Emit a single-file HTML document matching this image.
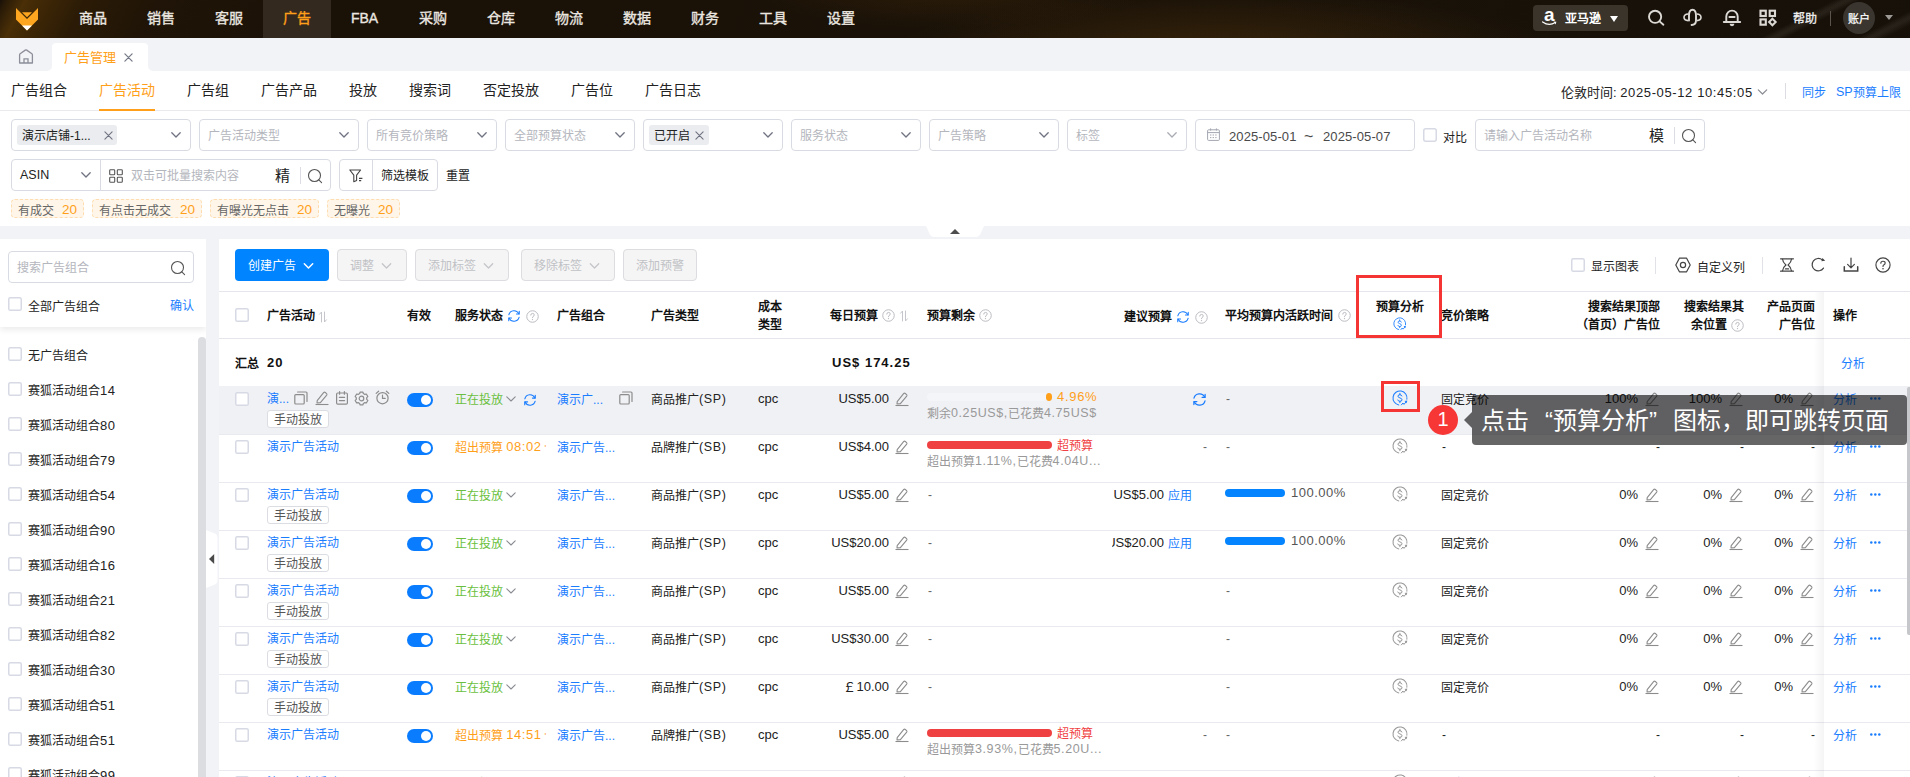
<!DOCTYPE html>
<html lang="zh-CN"><head><meta charset="utf-8"><title>ad</title><style>
*{box-sizing:border-box;margin:0;padding:0}
html,body{width:1910px;height:777px;overflow:hidden;background:#f2f3f7}
body{font-family:"Liberation Sans",sans-serif;font-size:12px;color:#222;position:relative;line-height:1}
.abs{position:absolute}
svg{display:block;overflow:visible}
/* top bar */
#top{position:absolute;left:0;top:0;width:1910px;height:38px;background:
 radial-gradient(ellipse 330px 60px at 1225px 52px,rgba(115,72,15,.32),rgba(115,72,15,0) 100%),
 radial-gradient(ellipse 200px 40px at 950px -12px,rgba(115,72,15,.2),rgba(115,72,15,0) 100%),
 linear-gradient(118deg,#181008 0px,#2a1b07 6px,#4a2f07 22px,#3e2706 40px,#2b1b06 75px,#1f1407 140px,#1a1107 300px,#1a1208 1100px,#15100a 1910px);}
.nav{position:absolute;top:0;height:38px;width:68px;text-align:center;line-height:37px;font-size:14px;color:#ebe7e0;font-weight:400;-webkit-text-stroke:.35px #ebe7e0;padding-right:1px}
.nav.on{background:#33291e;color:#ff9f1a;-webkit-text-stroke:.35px #ff9f1a}
.t{position:absolute;white-space:nowrap}
/* tabs */
#tabbar{position:absolute;left:0;top:38px;width:1910px;height:33px;background:#fff}
.tg{position:absolute;background:#f2f3f7}
#tab1{position:absolute;left:52px;top:5px;width:96px;height:28px;background:#fff;border-radius:4px 4px 0 0}
/* subnav */
#sub{position:absolute;left:0;top:71px;width:1910px;height:40px;background:#fff;border-bottom:1px solid #e9eaee}
.sn{position:absolute;top:0;height:39px;line-height:39px;font-size:14px;color:#222;white-space:nowrap}
.sn.on{color:#ff9f1a}
/* filters */
#filt{position:absolute;left:0;top:111px;width:1910px;height:115px;background:#fff}
.sel{position:absolute;height:32px;border:1px solid #d9dbe3;border-radius:4px;background:#fff}
.ph{position:absolute;left:8px;top:1px;line-height:30px;color:#b4b6bd;font-size:12px;white-space:nowrap}
.chev{position:absolute;right:9px;top:12px}
.chip{position:absolute;left:5px;top:5px;height:20px;background:#ebecef;border-radius:3px;line-height:22px;font-size:12px;color:#222;padding-left:5px;overflow:hidden;white-space:nowrap}
.ftag{position:absolute;top:88px;height:19px;border:1px dashed #ffddb0;background:#fff6e9;border-radius:4px;font-size:12px;line-height:17px;color:#666;white-space:nowrap}
.ftag b{font-weight:400;color:#ff9f1a;font-size:13.5px;position:absolute;right:6px;top:1px}
</style></head><body>
<div id="top">
<div class="abs" style="left:1700px;top:0;width:210px;height:38px;background:linear-gradient(153deg,rgba(255,240,220,0) 61px,rgba(255,240,220,.07) 66px,rgba(255,240,220,.07) 68px,rgba(255,240,220,0) 73px,rgba(255,240,220,0) 105px,rgba(255,240,220,.07) 110px,rgba(255,240,220,.07) 112px,rgba(255,240,220,0) 118px)"></div>
<div class="abs" style="left:15px;top:7px"><svg width="24" height="24" viewBox="0 0 24 24" style=""><path d="M1 1 L12 12 L23 1 V12.5 L12 23.5 L1 12.5 Z" fill="#ffa620"/><path d="M7 5.2 H17 L12 10.2 Z" fill="#ffa620"/><path d="M7 18.5 H17 L12 23.5 Z" fill="#fff"/></svg></div>
<div class="nav" style="left:59px">商品</div>
<div class="nav" style="left:127px">销售</div>
<div class="nav" style="left:195px">客服</div>
<div class="nav on" style="left:263px">广告</div>
<div class="nav" style="left:331px">FBA</div>
<div class="nav" style="left:399px">采购</div>
<div class="nav" style="left:467px">仓库</div>
<div class="nav" style="left:535px">物流</div>
<div class="nav" style="left:603px">数据</div>
<div class="nav" style="left:671px">财务</div>
<div class="nav" style="left:739px">工具</div>
<div class="nav" style="left:807px">设置</div>
<div class="abs" style="left:1533px;top:5px;width:95px;height:26px;background:#3a342b;border-radius:4px"></div>
<div class="t" style="left:1544px;top:5px;font-size:19px;font-weight:700;color:#fff">a</div>
<div class="abs" style="left:1542px;top:21px"><svg width="15" height="5" viewBox="0 0 15 5" style=""><path d="M0.6 0.9 Q7 5.4 13.2 1.6" fill="none" stroke="#fff" stroke-width="1.2" stroke-linecap="round"/><path d="M11.6 0.4 L14.4 0.8 L13.6 3.4 Z" fill="#fff"/></svg></div>
<div class="t" style="left:1565px;top:13px;font-size:12px;color:#fff;font-weight:700">亚马逊</div>
<div class="abs" style="left:1610px;top:16px;width:0;height:0;border-left:4.25px solid transparent;border-right:4.25px solid transparent;border-top:6px solid #fff"></div>
<div class="abs" style="left:1647px;top:9px"><svg width="18" height="18" viewBox="0 0 18 18" style=""><circle cx="8.1" cy="7.8" r="6.1" fill="none" stroke="#dcd9d5" stroke-width="1.9"/><path d="M12.6 12.4 L16.4 15.7" stroke="#dcd9d5" stroke-width="1.9" stroke-linecap="round"/></svg></div>
<div class="abs" style="left:1683px;top:8px"><svg width="18" height="18" viewBox="0 0 18 18" style=""><path d="M6.0 12.6 V7.6 Q6.0 1.8 9.5 1.8 Q13.0 1.8 13.0 7.6 V12.4 Q13.0 16.6 8.6 17.0" fill="none" stroke="#dcd9d5" stroke-width="1.9" stroke-linecap="round"/><path d="M5.2 6.0 Q1.0 6.2 1.0 9.3 Q1.0 12.4 5.2 12.6" fill="none" stroke="#dcd9d5" stroke-width="1.6"/><path d="M13.8 6.0 Q18.0 6.2 18.0 9.3 Q18.0 12.4 13.8 12.6" fill="none" stroke="#dcd9d5" stroke-width="1.6"/></svg></div>
<div class="abs" style="left:1723px;top:9px"><svg width="18" height="18" viewBox="0 0 18 18" style=""><path d="M3.3 13 V7.6 A5.7 6 0 0 1 14.7 7.6 V13" fill="none" stroke="#dcd9d5" stroke-width="1.9"/><path d="M0.8 13 H17.2 M6.4 8 H11.6" fill="none" stroke="#dcd9d5" stroke-width="1.9" stroke-linecap="round"/><path d="M6.6 14.8 A2.4 2.4 0 0 0 11.4 14.8 Z" fill="#dcd9d5"/></svg></div>
<div class="abs" style="left:1759px;top:9px"><svg width="18" height="18" viewBox="0 0 18 18" style=""><rect x="1.5" y="1.7" width="5.3" height="5.3" fill="none" stroke="#dcd9d5" stroke-width="2.1"/><rect x="10.7" y="1.7" width="5.3" height="5.3" fill="none" stroke="#dcd9d5" stroke-width="2.1"/><rect x="1.5" y="10.4" width="5.3" height="5.3" fill="none" stroke="#dcd9d5" stroke-width="2.1"/><path d="M13.4 9.7 L16.7 13 L13.4 16.3 L10.1 13 Z" fill="none" stroke="#dcd9d5" stroke-width="2" stroke-linejoin="miter"/></svg></div>
<div class="t" style="left:1793px;top:13px;font-size:12px;color:#f1f1f1;-webkit-text-stroke:.3px #f1f1f1;letter-spacing:.3px">帮助</div>
<div class="abs" style="left:1830px;top:11px;width:1px;height:15px;background:#5a544c"></div>
<div class="abs" style="left:1843px;top:2px;width:32px;height:32px;border-radius:16px;background:#3a362f"></div>
<div class="t" style="left:1848px;top:14px;font-size:11px;color:#fff;letter-spacing:-0.3px;-webkit-text-stroke:.25px #fff">账户</div>
<div class="abs" style="left:1885px;top:15px;width:0;height:0;border-left:4px solid transparent;border-right:4px solid transparent;border-top:5.5px solid #9d9a96"></div>
</div>
<div id="tabbar">
<div class="tg" style="left:0;top:0;width:52px;height:33px;border-bottom-right-radius:5px"></div><div class="tg" style="left:148px;top:0;width:1762px;height:33px;border-bottom-left-radius:5px"></div><div class="tg" style="left:52px;top:0;width:96px;height:12px"></div>
<div class="abs" style="left:18px;top:11px"><svg width="16" height="15" viewBox="0 0 16 15" style=""><path d="M1.6 14 V5.8 Q1.6 5.2 2.1 4.8 L7.3 1.1 Q8 0.6 8.7 1.1 L13.9 4.8 Q14.4 5.2 14.4 5.8 V14 Z" fill="none" stroke="#8c8e99" stroke-width="1.3" stroke-linejoin="round"/><path d="M6 14 V9.8 H10 V14" fill="none" stroke="#8c8e99" stroke-width="1.3"/></svg></div>
<div id="tab1"><div class="t" style="left:12px;top:8px;font-size:13px;color:#ff9f1a">广告管理</div><div class="abs" style="left:72px;top:10px"><svg width="9" height="9" viewBox="0 0 10 10" style=""><path d="M1 1 L9 9 M9 1 L1 9" fill="none" stroke="#757a88" stroke-width="1.4" stroke-linecap="round"/></svg></div></div>
</div>
<div id="sub">
<div class="sn" style="left:11px">广告组合</div>
<div class="sn on" style="left:99px">广告活动</div>
<div class="sn" style="left:187px">广告组</div>
<div class="sn" style="left:261px">广告产品</div>
<div class="sn" style="left:349px">投放</div>
<div class="sn" style="left:409px">搜索词</div>
<div class="sn" style="left:483px">否定投放</div>
<div class="sn" style="left:571px">广告位</div>
<div class="sn" style="left:645px">广告日志</div>
<div class="abs" style="left:99px;top:38px;width:56px;height:2px;background:#ff9f1a"></div>
<div class="t" style="left:1561px;top:15px;font-size:13px;color:#222">伦敦时间: <span style="letter-spacing:.62px">2025-05-12 10:45:05</span></div>
<div class="abs" style="left:1757px;top:18px"><svg width="11" height="6" viewBox="0 0 10 6" style=""><path d="M0.8 0.8 L5 5 L9.2 0.8" fill="none" stroke="#8a8c93" stroke-width="1.2" stroke-linecap="round" stroke-linejoin="round"/></svg></div>
<div class="abs" style="left:1785px;top:12px;width:1px;height:16px;background:#dcdde3"></div>
<div class="t" style="left:1802px;top:16px;font-size:12px;color:#1a7dff">同步</div>
<div class="t" style="left:1836px;top:16px;font-size:12px;color:#1a7dff"><span style="position:relative;top:-1px;font-size:12.5px">SP</span>预算上限</div>
</div>
<div id="filt">
<div class="sel" style="left:11px;top:8px;width:180px"><div class="chip" style="width:100px">演示店铺-1...<span class="abs" style="left:87px;top:6px"><svg width="9" height="9" viewBox="0 0 10 10" style=""><path d="M1 1 L9 9 M9 1 L1 9" fill="none" stroke="#6f7280" stroke-width="1.2" stroke-linecap="round"/></svg></span></div><div class="chev"><svg width="10" height="6" viewBox="0 0 10 6" style=""><path d="M0.8 0.8 L5 5 L9.2 0.8" fill="none" stroke="#6f7280" stroke-width="1.3" stroke-linecap="round" stroke-linejoin="round"/></svg></div></div>
<div class="sel" style="left:199px;top:8px;width:160px"><div class="ph">广告活动类型</div><div class="chev"><svg width="10" height="6" viewBox="0 0 10 6" style=""><path d="M0.8 0.8 L5 5 L9.2 0.8" fill="none" stroke="#6f7280" stroke-width="1.3" stroke-linecap="round" stroke-linejoin="round"/></svg></div></div>
<div class="sel" style="left:367px;top:8px;width:130px"><div class="ph">所有竞价策略</div><div class="chev"><svg width="10" height="6" viewBox="0 0 10 6" style=""><path d="M0.8 0.8 L5 5 L9.2 0.8" fill="none" stroke="#6f7280" stroke-width="1.3" stroke-linecap="round" stroke-linejoin="round"/></svg></div></div>
<div class="sel" style="left:505px;top:8px;width:130px"><div class="ph">全部预算状态</div><div class="chev"><svg width="10" height="6" viewBox="0 0 10 6" style=""><path d="M0.8 0.8 L5 5 L9.2 0.8" fill="none" stroke="#6f7280" stroke-width="1.3" stroke-linecap="round" stroke-linejoin="round"/></svg></div></div>
<div class="sel" style="left:643px;top:8px;width:140px"><div class="chip" style="width:60px">已开启<span class="abs" style="left:46px;top:6px"><svg width="9" height="9" viewBox="0 0 10 10" style=""><path d="M1 1 L9 9 M9 1 L1 9" fill="none" stroke="#6f7280" stroke-width="1.2" stroke-linecap="round"/></svg></span></div><div class="chev"><svg width="10" height="6" viewBox="0 0 10 6" style=""><path d="M0.8 0.8 L5 5 L9.2 0.8" fill="none" stroke="#6f7280" stroke-width="1.3" stroke-linecap="round" stroke-linejoin="round"/></svg></div></div>
<div class="sel" style="left:791px;top:8px;width:130px"><div class="ph">服务状态</div><div class="chev"><svg width="10" height="6" viewBox="0 0 10 6" style=""><path d="M0.8 0.8 L5 5 L9.2 0.8" fill="none" stroke="#6f7280" stroke-width="1.3" stroke-linecap="round" stroke-linejoin="round"/></svg></div></div>
<div class="sel" style="left:929px;top:8px;width:130px"><div class="ph">广告策略</div><div class="chev"><svg width="10" height="6" viewBox="0 0 10 6" style=""><path d="M0.8 0.8 L5 5 L9.2 0.8" fill="none" stroke="#6f7280" stroke-width="1.3" stroke-linecap="round" stroke-linejoin="round"/></svg></div></div>
<div class="sel" style="left:1067px;top:8px;width:120px"><div class="ph">标签</div><div class="chev"><svg width="10" height="6" viewBox="0 0 10 6" style=""><path d="M0.8 0.8 L5 5 L9.2 0.8" fill="none" stroke="#a9abb3" stroke-width="1.3" stroke-linecap="round" stroke-linejoin="round"/></svg></div></div>
<div class="sel" style="left:1195px;top:8px;width:220px"><div class="abs" style="left:11px;top:8px"><svg width="13" height="13" viewBox="0 0 13 13" style=""><rect x="0.6" y="1.8" width="11.8" height="10.6" rx="1" fill="none" stroke="#a3a6b0" stroke-width="1"/><path d="M0.6 4.6 H12.4 M3.6 0.4 V2.6 M9.4 0.4 V2.6" stroke="#a3a6b0" stroke-width="1"/><path d="M3 7 H10 M3 9.6 H10" stroke="#a3a6b0" stroke-width="1" stroke-dasharray="1.4 1.2"/></svg></div><div class="t" style="left:33px;top:10px;font-size:13px;color:#4a4a4a;letter-spacing:.1px">2025-05-01</div><div class="t" style="left:108px;top:9px;font-size:16px;color:#4a4a4a">~</div><div class="t" style="left:127px;top:10px;font-size:13px;color:#4a4a4a;letter-spacing:.1px">2025-05-07</div></div>
<div class="abs" style="left:1423px;top:17px"><svg width="14" height="14" viewBox="0 0 14 14" style=""><rect x="0.75" y="0.75" width="12.5" height="12.5" rx="2" fill="#fff" stroke="#d7dae4" stroke-width="1.5"/></svg></div>
<div class="t" style="left:1443px;top:21px;font-size:12px;color:#222">对比</div>
<div class="sel" style="left:1475px;top:8px;width:230px"><div class="ph">请输入广告活动名称</div><div class="t" style="left:173px;top:8px;font-size:15px;color:#222">模</div><div class="abs" style="left:198px;top:7px;width:1px;height:17px;background:#dcdde3"></div><div class="abs" style="left:205px;top:8px"><svg width="16" height="16" viewBox="0 0 16 16" style=""><circle cx="7.5" cy="7.5" r="6" fill="none" stroke="#555" stroke-width="1.1"/><path d="M11.8 11.8 L14.6 14.6" stroke="#555" stroke-width="1.1" stroke-linecap="round"/></svg></div></div>
<div class="sel" style="left:11px;top:48px;width:320px"></div>
<div class="abs" style="left:100px;top:48px;width:1px;height:32px;background:#d9dbe3"></div>
<div class="t" style="left:20px;top:58px;font-size:12.5px;color:#222">ASIN</div>
<div class="abs" style="left:81px;top:61px"><svg width="10" height="6" viewBox="0 0 10 6" style=""><path d="M0.8 0.8 L5 5 L9.2 0.8" fill="none" stroke="#6f7280" stroke-width="1.3" stroke-linecap="round" stroke-linejoin="round"/></svg></div>
<div class="abs" style="left:109px;top:58px"><svg width="14" height="14" viewBox="0 0 14 14" style=""><rect x="0.7" y="0.7" width="5" height="5" rx="0.8" fill="none" stroke="#555" stroke-width="1.1"/><rect x="8.3" y="0.7" width="5" height="5" rx="0.8" fill="none" stroke="#555" stroke-width="1.1"/><rect x="0.7" y="8.3" width="5" height="5" rx="0.8" fill="none" stroke="#555" stroke-width="1.1"/><rect x="8.3" y="8.3" width="5" height="5" rx="0.8" fill="none" stroke="#555" stroke-width="1.1"/></svg></div>
<div class="t" style="left:131px;top:59px;font-size:12px;color:#b4b6bd">双击可批量搜索内容</div>
<div class="t" style="left:275px;top:57px;font-size:15px;color:#222">精</div>
<div class="abs" style="left:300px;top:56px;width:1px;height:17px;background:#dcdde3"></div>
<div class="abs" style="left:307px;top:57px"><svg width="16" height="16" viewBox="0 0 16 16" style=""><circle cx="7.5" cy="7.5" r="6" fill="none" stroke="#555" stroke-width="1.1"/><path d="M11.8 11.8 L14.6 14.6" stroke="#555" stroke-width="1.1" stroke-linecap="round"/></svg></div>
<div class="sel" style="left:339px;top:48px;width:99px"></div>
<div class="abs" style="left:372px;top:48px;width:1px;height:32px;background:#d9dbe3"></div>
<div class="abs" style="left:349px;top:58px"><svg width="14" height="14" viewBox="0 0 14 14" style=""><path d="M0.8 1 H11.6 L7.6 6.2 V11.6 L4.8 12.8 V6.2 Z" fill="none" stroke="#444" stroke-width="1.1" stroke-linejoin="round"/><path d="M10 9.4 H13.4 M10 11.6 H12.2" stroke="#444" stroke-width="1.1"/></svg></div>
<div class="t" style="left:381px;top:59px;font-size:12px;color:#222">筛选模板</div>
<div class="t" style="left:446px;top:59px;font-size:12px;color:#222">重置</div>
<div class="ftag" style="left:11px;width:73px"><span style="position:absolute;left:6px;top:3px">有成交</span><b>20</b></div>
<div class="ftag" style="left:92px;width:110px"><span style="position:absolute;left:6px;top:3px">有点击无成交</span><b>20</b></div>
<div class="ftag" style="left:210px;width:109px"><span style="position:absolute;left:6px;top:3px">有曝光无点击</span><b>20</b></div>
<div class="ftag" style="left:327px;width:73px"><span style="position:absolute;left:6px;top:3px">无曝光</span><b>20</b></div>
</div>
<div class="abs" style="left:0;top:226px;width:1910px;height:13px;background:#f2f3f7"></div>
<div class="abs" style="left:926px;top:226px"><svg width="58" height="11" viewBox="0 0 58 11" style=""><path d="M0 0 H58 L54.2 8.6 Q53 11 50.4 11 H7.6 Q5 11 3.8 8.6 Z" fill="#fff"/><path d="M24 8 L29 3 L34 8 Z" fill="#4d4d4d"/></svg></div>
<div id="side" class="abs" style="left:0;top:239px;width:206px;height:538px;background:#fff;overflow:hidden">
<div class="abs" style="left:8px;top:108px"><svg width="14" height="14" viewBox="0 0 14 14" style=""><rect x="0.75" y="0.75" width="12.5" height="12.5" rx="1.6" fill="#fff" stroke="#d7dae4" stroke-width="1.5"/></svg></div>
<div class="t" style="left:28px;top:111px;font-size:12px;color:#222">无广告组合</div>
<div class="abs" style="left:8px;top:143px"><svg width="14" height="14" viewBox="0 0 14 14" style=""><rect x="0.75" y="0.75" width="12.5" height="12.5" rx="1.6" fill="#fff" stroke="#d7dae4" stroke-width="1.5"/></svg></div>
<div class="t" style="left:28px;top:146px;font-size:12px;color:#222">赛狐活动组合<span style="font-size:13px;letter-spacing:.6px;line-height:0">14</span></div>
<div class="abs" style="left:8px;top:178px"><svg width="14" height="14" viewBox="0 0 14 14" style=""><rect x="0.75" y="0.75" width="12.5" height="12.5" rx="1.6" fill="#fff" stroke="#d7dae4" stroke-width="1.5"/></svg></div>
<div class="t" style="left:28px;top:181px;font-size:12px;color:#222">赛狐活动组合<span style="font-size:13px;letter-spacing:.6px;line-height:0">80</span></div>
<div class="abs" style="left:8px;top:213px"><svg width="14" height="14" viewBox="0 0 14 14" style=""><rect x="0.75" y="0.75" width="12.5" height="12.5" rx="1.6" fill="#fff" stroke="#d7dae4" stroke-width="1.5"/></svg></div>
<div class="t" style="left:28px;top:216px;font-size:12px;color:#222">赛狐活动组合<span style="font-size:13px;letter-spacing:.6px;line-height:0">79</span></div>
<div class="abs" style="left:8px;top:248px"><svg width="14" height="14" viewBox="0 0 14 14" style=""><rect x="0.75" y="0.75" width="12.5" height="12.5" rx="1.6" fill="#fff" stroke="#d7dae4" stroke-width="1.5"/></svg></div>
<div class="t" style="left:28px;top:251px;font-size:12px;color:#222">赛狐活动组合<span style="font-size:13px;letter-spacing:.6px;line-height:0">54</span></div>
<div class="abs" style="left:8px;top:283px"><svg width="14" height="14" viewBox="0 0 14 14" style=""><rect x="0.75" y="0.75" width="12.5" height="12.5" rx="1.6" fill="#fff" stroke="#d7dae4" stroke-width="1.5"/></svg></div>
<div class="t" style="left:28px;top:286px;font-size:12px;color:#222">赛狐活动组合<span style="font-size:13px;letter-spacing:.6px;line-height:0">90</span></div>
<div class="abs" style="left:8px;top:318px"><svg width="14" height="14" viewBox="0 0 14 14" style=""><rect x="0.75" y="0.75" width="12.5" height="12.5" rx="1.6" fill="#fff" stroke="#d7dae4" stroke-width="1.5"/></svg></div>
<div class="t" style="left:28px;top:321px;font-size:12px;color:#222">赛狐活动组合<span style="font-size:13px;letter-spacing:.6px;line-height:0">16</span></div>
<div class="abs" style="left:8px;top:353px"><svg width="14" height="14" viewBox="0 0 14 14" style=""><rect x="0.75" y="0.75" width="12.5" height="12.5" rx="1.6" fill="#fff" stroke="#d7dae4" stroke-width="1.5"/></svg></div>
<div class="t" style="left:28px;top:356px;font-size:12px;color:#222">赛狐活动组合<span style="font-size:13px;letter-spacing:.6px;line-height:0">21</span></div>
<div class="abs" style="left:8px;top:388px"><svg width="14" height="14" viewBox="0 0 14 14" style=""><rect x="0.75" y="0.75" width="12.5" height="12.5" rx="1.6" fill="#fff" stroke="#d7dae4" stroke-width="1.5"/></svg></div>
<div class="t" style="left:28px;top:391px;font-size:12px;color:#222">赛狐活动组合<span style="font-size:13px;letter-spacing:.6px;line-height:0">82</span></div>
<div class="abs" style="left:8px;top:423px"><svg width="14" height="14" viewBox="0 0 14 14" style=""><rect x="0.75" y="0.75" width="12.5" height="12.5" rx="1.6" fill="#fff" stroke="#d7dae4" stroke-width="1.5"/></svg></div>
<div class="t" style="left:28px;top:426px;font-size:12px;color:#222">赛狐活动组合<span style="font-size:13px;letter-spacing:.6px;line-height:0">30</span></div>
<div class="abs" style="left:8px;top:458px"><svg width="14" height="14" viewBox="0 0 14 14" style=""><rect x="0.75" y="0.75" width="12.5" height="12.5" rx="1.6" fill="#fff" stroke="#d7dae4" stroke-width="1.5"/></svg></div>
<div class="t" style="left:28px;top:461px;font-size:12px;color:#222">赛狐活动组合<span style="font-size:13px;letter-spacing:.6px;line-height:0">51</span></div>
<div class="abs" style="left:8px;top:493px"><svg width="14" height="14" viewBox="0 0 14 14" style=""><rect x="0.75" y="0.75" width="12.5" height="12.5" rx="1.6" fill="#fff" stroke="#d7dae4" stroke-width="1.5"/></svg></div>
<div class="t" style="left:28px;top:496px;font-size:12px;color:#222">赛狐活动组合<span style="font-size:13px;letter-spacing:.6px;line-height:0">51</span></div>
<div class="abs" style="left:8px;top:528px"><svg width="14" height="14" viewBox="0 0 14 14" style=""><rect x="0.75" y="0.75" width="12.5" height="12.5" rx="1.6" fill="#fff" stroke="#d7dae4" stroke-width="1.5"/></svg></div>
<div class="t" style="left:28px;top:531px;font-size:12px;color:#222">赛狐活动组合<span style="font-size:13px;letter-spacing:.6px;line-height:0">99</span></div>
<div class="abs" style="left:198px;top:98px;width:8px;height:460px;background:#dcdde1;border-radius:4px"></div>
<div class="abs" style="left:0;top:0;width:206px;height:88px;background:#fff;box-shadow:0 3px 6px rgba(0,0,0,.08)">
<div class="abs" style="left:8px;top:12px;width:186px;height:32px;border:1px solid #d9dbe3;border-radius:4px"></div>
<div class="t" style="left:17px;top:23px;font-size:12px;color:#b4b6bd">搜索广告组合</div>
<div class="abs" style="left:170px;top:21px"><svg width="16" height="16" viewBox="0 0 16 16" style=""><circle cx="7.5" cy="7.5" r="6" fill="none" stroke="#555" stroke-width="1.1"/><path d="M11.8 11.8 L14.6 14.6" stroke="#555" stroke-width="1.1" stroke-linecap="round"/></svg></div>
<div class="abs" style="left:8px;top:58px"><svg width="14" height="14" viewBox="0 0 14 14" style=""><rect x="0.75" y="0.75" width="12.5" height="12.5" rx="1.6" fill="#fff" stroke="#d7dae4" stroke-width="1.5"/></svg></div>
<div class="t" style="left:28px;top:62px;font-size:12px;color:#222">全部广告组合</div>
<div class="t" style="left:170px;top:61px;font-size:12px;color:#1a7dff">确认</div>
</div>
</div>
<div class="abs" style="left:206px;top:530px"><svg width="12" height="58" viewBox="0 0 12 58" style=""><path d="M0 0 L9 3.6 Q11.5 4.8 11.5 7.5 V50.5 Q11.5 53.2 9 54.4 L0 58 Z" fill="#fff"/><path d="M8.2 24 V34 L3 29 Z" fill="#4a4a4a"/></svg></div>
<div class="abs" style="left:219px;top:239px;width:1691px;height:538px;background:#fff"></div>
<div class="abs" style="left:235px;top:249px;width:94px;height:32px;background:#0084ff;border-radius:4px"></div>
<div class="t" style="left:248px;top:260px;color:#fff;font-size:12px">创建广告</div>
<div class="abs" style="left:303px;top:263px"><svg width="11" height="6" viewBox="0 0 10 6" style=""><path d="M0.8 0.8 L5 5 L9.2 0.8" fill="none" stroke="#fff" stroke-width="1.5" stroke-linecap="round" stroke-linejoin="round"/></svg></div>
<div class="abs" style="left:337px;top:249px;width:70px;height:32px;background:#f5f5f5;border:1px solid #dcdce1;border-radius:4px"></div>
<div class="t" style="left:350px;top:260px;color:#c0c1c5;font-size:12px">调整</div>
<div class="abs" style="left:381px;top:262.5px"><svg width="11" height="6" viewBox="0 0 10 6" style=""><path d="M0.8 0.8 L5 5 L9.2 0.8" fill="none" stroke="#c4c5c9" stroke-width="1.3" stroke-linecap="round" stroke-linejoin="round"/></svg></div>
<div class="abs" style="left:415px;top:249px;width:94px;height:32px;background:#f5f5f5;border:1px solid #dcdce1;border-radius:4px"></div>
<div class="t" style="left:428px;top:260px;color:#c0c1c5;font-size:12px">添加标签</div>
<div class="abs" style="left:483px;top:262.5px"><svg width="11" height="6" viewBox="0 0 10 6" style=""><path d="M0.8 0.8 L5 5 L9.2 0.8" fill="none" stroke="#c4c5c9" stroke-width="1.3" stroke-linecap="round" stroke-linejoin="round"/></svg></div>
<div class="abs" style="left:521px;top:249px;width:94px;height:32px;background:#f5f5f5;border:1px solid #dcdce1;border-radius:4px"></div>
<div class="t" style="left:534px;top:260px;color:#c0c1c5;font-size:12px">移除标签</div>
<div class="abs" style="left:589px;top:262.5px"><svg width="11" height="6" viewBox="0 0 10 6" style=""><path d="M0.8 0.8 L5 5 L9.2 0.8" fill="none" stroke="#c4c5c9" stroke-width="1.3" stroke-linecap="round" stroke-linejoin="round"/></svg></div>
<div class="abs" style="left:623px;top:249px;width:74px;height:32px;background:#f5f5f5;border:1px solid #dcdce1;border-radius:4px"></div>
<div class="t" style="left:636px;top:260px;color:#c0c1c5;font-size:12px">添加预警</div>
<div class="abs" style="left:1571px;top:258px"><svg width="14" height="14" viewBox="0 0 14 14" style=""><rect x="0.75" y="0.75" width="12.5" height="12.5" rx="1.6" fill="#fff" stroke="#d7dae4" stroke-width="1.5"/></svg></div>
<div class="t" style="left:1591px;top:261px;font-size:12px;color:#222">显示图表</div>
<div class="abs" style="left:1655px;top:257px;width:1px;height:17px;background:#e1e2e8"></div>
<div class="abs" style="left:1675px;top:257px"><svg width="16" height="16" viewBox="0 0 16 16" style=""><path d="M4.4 1.2 H11.6 L15.2 8 L11.6 14.8 H4.4 L0.8 8 Z" fill="none" stroke="#444" stroke-width="1.2" stroke-linejoin="round"/><circle cx="8" cy="8" r="2.6" fill="none" stroke="#444" stroke-width="1.2"/></svg></div>
<div class="t" style="left:1697px;top:262px;font-size:12px;color:#222">自定义列</div>
<div class="abs" style="left:1762px;top:257px;width:1px;height:17px;background:#e1e2e8"></div>
<div class="abs" style="left:1780px;top:258px"><svg width="14" height="14" viewBox="0 0 14 14" style=""><path d="M0.6 0.8 H13.4 M0.6 13.2 H13.4" fill="none" stroke="#444" stroke-width="1.3" stroke-linecap="round"/><path d="M2.4 0.8 Q2.8 4.6 5.9 7 Q2.8 9.4 2.4 13.2 M11.6 0.8 Q11.2 4.6 8.1 7 Q11.2 9.4 11.6 13.2" fill="none" stroke="#444" stroke-width="1.2"/><path d="M5.4 10.9 H8.6" stroke="#444" stroke-width="1.3" stroke-linecap="round"/></svg></div>
<div class="abs" style="left:1811px;top:257px"><svg width="15" height="15" viewBox="0 0 15 15" style=""><path d="M11.3 2.9 A6.2 6.2 0 1 0 12.5 11.1" fill="none" stroke="#444" stroke-width="1.2" stroke-linecap="round"/><path d="M11.4 0.9 L14.2 3.8 L10.4 4.2 Z" fill="#444"/></svg></div>
<div class="abs" style="left:1843px;top:257px"><svg width="16" height="16" viewBox="0 0 16 16" style=""><path d="M8 1 V10.6 M4.6 7.4 L8 10.8 L11.4 7.4" fill="none" stroke="#444" stroke-width="1.2" stroke-linecap="round" stroke-linejoin="round"/><path d="M1.3 9.8 V14.0 H14.7 V9.8" fill="none" stroke="#444" stroke-width="1.5" stroke-linecap="round" stroke-linejoin="miter"/></svg></div>
<div class="abs" style="left:1875px;top:257px"><svg width="16" height="16" viewBox="0 0 14 14" style=""><circle cx="7" cy="7" r="6.2" fill="none" stroke="#444" stroke-width="1"/><path d="M5.1 5.5 Q5.1 3.7 7 3.7 Q8.9 3.7 8.9 5.3 Q8.9 6.4 7.6 7.0 Q7 7.3 7 8.3" fill="none" stroke="#444" stroke-width="1" stroke-linecap="round"/><circle cx="7" cy="10.3" r="0.7" fill="#444"/></svg></div>
<div class="abs" style="left:219px;top:291px;width:1691px;height:1px;background:#e4e6ec"></div>
<div class="abs" style="left:219px;top:338px;width:1691px;height:1px;background:#e4e6ec"></div>
<div class="abs" style="left:235px;top:308px"><svg width="14" height="14" viewBox="0 0 14 14" style=""><rect x="0.75" y="0.75" width="12.5" height="12.5" rx="1.6" fill="#fff" stroke="#d7dae4" stroke-width="1.5"/></svg></div>
<div class="t" style="left:267px;top:310px;font-weight:700;font-size:12px;color:#111">广告活动</div>
<div class="abs" style="left:319px;top:310.5px"><svg width="8" height="12" viewBox="0 0 8 12" style=""><path d="M2.5 11 V1 L0.6 3.2 M5.5 1 V11 L7.4 8.8" fill="none" stroke="#c4c6cc" stroke-width="1" stroke-linecap="round" stroke-linejoin="round"/></svg></div>
<div class="t" style="left:407px;top:310px;font-weight:700;font-size:12px;color:#111">有效</div>
<div class="t" style="left:455px;top:310px;font-weight:700;font-size:12px;color:#111">服务状态</div>
<div class="abs" style="left:507px;top:309px"><svg width="14" height="14" viewBox="0 0 16 16" style=""><path d="M2.1 6.6 A6.1 6.1 0 0 1 13.6 5.6" fill="none" stroke="#1a7dff" stroke-width="1.2" stroke-linecap="round"/><path d="M14.0 2.6 V5.8 H10.8" fill="none" stroke="#1a7dff" stroke-width="1.2" stroke-linecap="round" stroke-linejoin="round"/><path d="M13.9 9.4 A6.1 6.1 0 0 1 2.4 10.4" fill="none" stroke="#1a7dff" stroke-width="1.2" stroke-linecap="round"/><path d="M2.0 13.4 V10.2 H5.2" fill="none" stroke="#1a7dff" stroke-width="1.2" stroke-linecap="round" stroke-linejoin="round"/></svg></div>
<div class="abs" style="left:526px;top:310px"><svg width="13" height="13" viewBox="0 0 14 14" style=""><circle cx="7" cy="7" r="6.2" fill="none" stroke="#b5b7bd" stroke-width="1"/><path d="M5.1 5.5 Q5.1 3.7 7 3.7 Q8.9 3.7 8.9 5.3 Q8.9 6.4 7.6 7.0 Q7 7.3 7 8.3" fill="none" stroke="#b5b7bd" stroke-width="1" stroke-linecap="round"/><circle cx="7" cy="10.3" r="0.7" fill="#b5b7bd"/></svg></div>
<div class="t" style="left:557px;top:310px;font-weight:700;font-size:12px;color:#111">广告组合</div>
<div class="t" style="left:651px;top:310px;font-weight:700;font-size:12px;color:#111">广告类型</div>
<div class="t" style="left:758px;top:301px;font-weight:700;font-size:12px;color:#111">成本</div>
<div class="t" style="left:758px;top:319px;font-weight:700;font-size:12px;color:#111">类型</div>
<div class="t" style="left:830px;top:310px;font-weight:700;font-size:12px;color:#111">每日预算</div>
<div class="abs" style="left:882px;top:309px"><svg width="13" height="13" viewBox="0 0 14 14" style=""><circle cx="7" cy="7" r="6.2" fill="none" stroke="#b5b7bd" stroke-width="1"/><path d="M5.1 5.5 Q5.1 3.7 7 3.7 Q8.9 3.7 8.9 5.3 Q8.9 6.4 7.6 7.0 Q7 7.3 7 8.3" fill="none" stroke="#b5b7bd" stroke-width="1" stroke-linecap="round"/><circle cx="7" cy="10.3" r="0.7" fill="#b5b7bd"/></svg></div>
<div class="abs" style="left:900px;top:309.5px"><svg width="8" height="12" viewBox="0 0 8 12" style=""><path d="M2.5 11 V1 L0.6 3.2 M5.5 1 V11 L7.4 8.8" fill="none" stroke="#c4c6cc" stroke-width="1" stroke-linecap="round" stroke-linejoin="round"/></svg></div>
<div class="t" style="left:927px;top:310px;font-weight:700;font-size:12px;color:#111">预算剩余</div>
<div class="abs" style="left:979px;top:309px"><svg width="13" height="13" viewBox="0 0 14 14" style=""><circle cx="7" cy="7" r="6.2" fill="none" stroke="#b5b7bd" stroke-width="1"/><path d="M5.1 5.5 Q5.1 3.7 7 3.7 Q8.9 3.7 8.9 5.3 Q8.9 6.4 7.6 7.0 Q7 7.3 7 8.3" fill="none" stroke="#b5b7bd" stroke-width="1" stroke-linecap="round"/><circle cx="7" cy="10.3" r="0.7" fill="#b5b7bd"/></svg></div>
<div class="t" style="left:1124px;top:311px;font-weight:700;font-size:12px;color:#111">建议预算</div>
<div class="abs" style="left:1176px;top:310px"><svg width="14" height="14" viewBox="0 0 16 16" style=""><path d="M2.1 6.6 A6.1 6.1 0 0 1 13.6 5.6" fill="none" stroke="#1a7dff" stroke-width="1.2" stroke-linecap="round"/><path d="M14.0 2.6 V5.8 H10.8" fill="none" stroke="#1a7dff" stroke-width="1.2" stroke-linecap="round" stroke-linejoin="round"/><path d="M13.9 9.4 A6.1 6.1 0 0 1 2.4 10.4" fill="none" stroke="#1a7dff" stroke-width="1.2" stroke-linecap="round"/><path d="M2.0 13.4 V10.2 H5.2" fill="none" stroke="#1a7dff" stroke-width="1.2" stroke-linecap="round" stroke-linejoin="round"/></svg></div>
<div class="abs" style="left:1195px;top:311px"><svg width="13" height="13" viewBox="0 0 14 14" style=""><circle cx="7" cy="7" r="6.2" fill="none" stroke="#b5b7bd" stroke-width="1"/><path d="M5.1 5.5 Q5.1 3.7 7 3.7 Q8.9 3.7 8.9 5.3 Q8.9 6.4 7.6 7.0 Q7 7.3 7 8.3" fill="none" stroke="#b5b7bd" stroke-width="1" stroke-linecap="round"/><circle cx="7" cy="10.3" r="0.7" fill="#b5b7bd"/></svg></div>
<div class="t" style="left:1225px;top:310px;font-weight:700;font-size:12px;color:#111">平均预算内活跃时间</div>
<div class="abs" style="left:1338px;top:309px"><svg width="13" height="13" viewBox="0 0 14 14" style=""><circle cx="7" cy="7" r="6.2" fill="none" stroke="#b5b7bd" stroke-width="1"/><path d="M5.1 5.5 Q5.1 3.7 7 3.7 Q8.9 3.7 8.9 5.3 Q8.9 6.4 7.6 7.0 Q7 7.3 7 8.3" fill="none" stroke="#b5b7bd" stroke-width="1" stroke-linecap="round"/><circle cx="7" cy="10.3" r="0.7" fill="#b5b7bd"/></svg></div>
<div class="t" style="left:1376px;top:301px;font-weight:700;font-size:12px;color:#111">预算分析</div>
<div class="abs" style="left:1393px;top:317px"><svg width="13.5" height="13.5" viewBox="0 0 16 16" style=""><path d="M14.9 9.2 A7 7 0 1 0 6.8 14.9" fill="none" stroke="#1a7dff" stroke-width="1.05" stroke-linecap="round"/><path d="M9.9 6.0 Q9.5 4.7 7.9 4.7 Q6.0 4.7 6.0 6.2 Q6.0 7.5 7.9 7.9 Q10.0 8.4 10.0 9.8 Q10.0 11.3 7.9 11.3 Q6.1 11.3 5.8 10.0 M7.9 3.3 V4.7 M7.9 11.3 V12.7" fill="none" stroke="#1a7dff" stroke-width="1.0" stroke-linecap="round"/><path d="M9.4 14.9 L10.9 13.0 L12.0 14.4 L13.8 12.2" fill="none" stroke="#1a7dff" stroke-width="1.0" stroke-linecap="round" stroke-linejoin="round"/><path d="M12.5 10.9 L15.3 10.4 L14.7 13.2 Z" fill="#1a7dff"/></svg></div>
<div class="t" style="left:1441px;top:310px;font-weight:700;font-size:12px;color:#111">竞价策略</div>
<div class="t" style="right:250px;top:301px;font-weight:700;font-size:12px;color:#111">搜索结果顶部</div>
<div class="t" style="right:250px;top:319px;font-weight:700;font-size:12px;color:#111;letter-spacing:0">（首页）广告位</div>
<div class="t" style="right:166px;top:301px;font-weight:700;font-size:12px;color:#111">搜索结果其</div>
<div class="t" style="right:183px;top:319px;font-weight:700;font-size:12px;color:#111">余位置</div>
<div class="abs" style="left:1731px;top:319px"><svg width="13" height="13" viewBox="0 0 14 14" style=""><circle cx="7" cy="7" r="6.2" fill="none" stroke="#b5b7bd" stroke-width="1"/><path d="M5.1 5.5 Q5.1 3.7 7 3.7 Q8.9 3.7 8.9 5.3 Q8.9 6.4 7.6 7.0 Q7 7.3 7 8.3" fill="none" stroke="#b5b7bd" stroke-width="1" stroke-linecap="round"/><circle cx="7" cy="10.3" r="0.7" fill="#b5b7bd"/></svg></div>
<div class="t" style="right:95px;top:301px;font-weight:700;font-size:12px;color:#111">产品页面</div>
<div class="t" style="right:95px;top:319px;font-weight:700;font-size:12px;color:#111">广告位</div>
<div class="t" style="left:235px;top:358px;font-weight:700;font-size:12px;color:#111">汇总</div>
<div class="t" style="left:267px;top:356px;font-weight:700;font-size:13px;color:#111;letter-spacing:1px">20</div>
<div class="t" style="left:832px;top:356px;font-weight:700;font-size:13px;color:#111;letter-spacing:1px">US$ 174.25</div>
<div class="abs" style="left:219px;top:386px;width:1691px;height:1px;background:#e9eaef"></div>
<div class="abs" style="left:219px;top:386px;width:1691px;height:48px;background:#f0f1f5"></div>
<div class="abs" style="left:219px;top:434px;width:1691px;height:1px;background:#e9eaef"></div>
<div class="abs" style="left:235px;top:392px"><svg width="14" height="14" viewBox="0 0 14 14" style=""><rect x="0.75" y="0.75" width="12.5" height="12.5" rx="1.6" fill="#fff" stroke="#d7dae4" stroke-width="1.5"/></svg></div>
<div class="t" style="left:267px;top:393px;font-size:12px;color:#1a7dff">演...</div>
<div class="abs" style="left:294px;top:391px"><svg width="14" height="14" viewBox="0 0 14 14" style=""><rect x="0.8" y="3.6" width="9.4" height="9.4" rx="1" fill="none" stroke="#8c8c8c" stroke-width="1.2"/><path d="M3.6 1.0 H12.0 Q13.0 1.0 13.0 2.0 V10.4" fill="none" stroke="#8c8c8c" stroke-width="1.2" stroke-linecap="round"/></svg></div>
<div class="abs" style="left:315px;top:391px"><svg width="14" height="14" viewBox="0 0 14 14" style=""><path d="M2.2 9.6 L8.6 1.6 Q9.4 0.8 10.3 1.5 L11.6 2.6 Q12.3 3.3 11.7 4.1 L5.4 11.6 L2.0 12.0 Z" fill="none" stroke="#8c8c8c" stroke-width="1.1" stroke-linejoin="round"/><path d="M0.5 13.5 H13.5" stroke="#8c8c8c" stroke-width="1.1"/></svg></div>
<div class="abs" style="left:335px;top:391px"><svg width="14" height="14" viewBox="0 0 14 14" style=""><rect x="1.6" y="2.0" width="10.8" height="11.2" rx="1.2" fill="none" stroke="#8c8c8c" stroke-width="1.2"/><path d="M4.6 0.6 V3.2 M9.4 0.6 V3.2 M4.4 6.4 H9.6 M4.4 9.6 H9.6" stroke="#8c8c8c" stroke-width="1.2" stroke-linecap="round"/></svg></div>
<div class="abs" style="left:354px;top:391px"><svg width="15" height="15" viewBox="0 0 15 15" style=""><path d="M5.69 2.52 L6.02 1.07 L8.98 1.07 L9.31 2.52 L10.91 3.44 L12.33 3.00 L13.81 5.57 L12.72 6.58 L12.72 8.42 L13.81 9.43 L12.33 12.00 L10.91 11.56 L9.31 12.48 L8.98 13.93 L6.02 13.93 L5.69 12.48 L4.09 11.56 L2.67 12.00 L1.19 9.43 L2.28 8.42 L2.28 6.58 L1.19 5.57 L2.67 3.00 L4.09 3.44 Z" fill="none" stroke="#8c8c8c" stroke-width="1.2" stroke-linejoin="round"/><circle cx="7.5" cy="7.5" r="2.3" fill="none" stroke="#8c8c8c" stroke-width="1.2"/></svg></div>
<div class="abs" style="left:375px;top:390px"><svg width="15" height="15" viewBox="0 0 15 15" style=""><circle cx="7.5" cy="8.2" r="5.6" fill="none" stroke="#8c8c8c" stroke-width="1.2"/><path d="M7.5 5.2 V8.4 H10.2 M1.2 3.4 L3.6 1.2 M13.8 3.4 L11.4 1.2" fill="none" stroke="#8c8c8c" stroke-width="1.2" stroke-linecap="round" stroke-linejoin="round"/></svg></div>
<div class="abs" style="left:267px;top:410px;width:62px;height:18px;border:1px solid #dcdde3;border-radius:3px;background:#fff"></div>
<div class="t" style="left:274px;top:414px;font-size:12px;color:#555">手动投放</div>
<div class="abs" style="left:407px;top:393px;width:26px;height:14px;border-radius:7px;background:#0a7cff"></div><div class="abs" style="left:421px;top:395px;width:10px;height:10px;border-radius:5px;background:#fff"></div>
<div class="t" style="left:455px;top:394px;font-size:12px;color:#6abf40">正在投放</div>
<div class="abs" style="left:506px;top:396px"><svg width="10" height="6" viewBox="0 0 10 6" style=""><path d="M0.8 0.8 L5 5 L9.2 0.8" fill="none" stroke="#8a8c93" stroke-width="1.1" stroke-linecap="round" stroke-linejoin="round"/></svg></div>
<div class="abs" style="left:523px;top:393px"><svg width="14" height="14" viewBox="0 0 16 16" style=""><path d="M2.1 6.6 A6.1 6.1 0 0 1 13.6 5.6" fill="none" stroke="#1a7dff" stroke-width="1.3" stroke-linecap="round"/><path d="M14.0 2.6 V5.8 H10.8" fill="none" stroke="#1a7dff" stroke-width="1.3" stroke-linecap="round" stroke-linejoin="round"/><path d="M13.9 9.4 A6.1 6.1 0 0 1 2.4 10.4" fill="none" stroke="#1a7dff" stroke-width="1.3" stroke-linecap="round"/><path d="M2.0 13.4 V10.2 H5.2" fill="none" stroke="#1a7dff" stroke-width="1.3" stroke-linecap="round" stroke-linejoin="round"/></svg></div>
<div class="t" style="left:557px;top:394px;font-size:12px;color:#1a7dff">演示广...</div>
<div class="abs" style="left:619px;top:391px"><svg width="14" height="14" viewBox="0 0 14 14" style=""><rect x="0.8" y="3.6" width="9.4" height="9.4" rx="1" fill="none" stroke="#8c8c8c" stroke-width="1.2"/><path d="M3.6 1.0 H12.0 Q13.0 1.0 13.0 2.0 V10.4" fill="none" stroke="#8c8c8c" stroke-width="1.2" stroke-linecap="round"/></svg></div>
<div class="t" style="left:651px;top:394px;font-size:12px;color:#222">商品推广<span style="position:relative;top:-1.5px;font-size:12.5px;letter-spacing:.6px">(SP)</span></div>
<div class="t" style="left:758px;top:392px;font-size:13px;color:#222">cpc</div>
<div class="t" style="right:1021px;top:392px;font-size:13px;color:#222">US$5.00</div>
<div class="abs" style="left:895px;top:392px"><svg width="14" height="14" viewBox="0 0 14 14" style=""><path d="M2.2 9.6 L8.6 1.6 Q9.4 0.8 10.3 1.5 L11.6 2.6 Q12.3 3.3 11.7 4.1 L5.4 11.6 L2.0 12.0 Z" fill="none" stroke="#8c8c8c" stroke-width="1.1" stroke-linejoin="round"/><path d="M0.5 13.5 H13.5" stroke="#8c8c8c" stroke-width="1.1"/></svg></div>
<div class="abs" style="left:927px;top:393px;width:120px;height:8px;border-radius:4px;background:#f4f5f8"></div>
<div class="abs" style="left:1046px;top:393px;width:6px;height:7.5px;border-radius:50%;background:#ff9f1a"></div>
<div class="t" style="left:1057px;top:390px;font-size:13px;color:#ff9f1a;letter-spacing:.7px">4.96%</div>
<div class="t" style="left:927px;top:408px;font-size:12px;color:#999">剩余<span style="position:relative;top:-1.5px;font-size:12.5px;letter-spacing:.6px">0.25US$,</span>已花费<span style="position:relative;top:-1.5px;font-size:12.5px;letter-spacing:.6px">4.75US$</span></div>
<div class="abs" style="left:1192px;top:392px"><svg width="15" height="15" viewBox="0 0 16 16" style=""><path d="M2.1 6.6 A6.1 6.1 0 0 1 13.6 5.6" fill="none" stroke="#1a7dff" stroke-width="1.3" stroke-linecap="round"/><path d="M14.0 2.6 V5.8 H10.8" fill="none" stroke="#1a7dff" stroke-width="1.3" stroke-linecap="round" stroke-linejoin="round"/><path d="M13.9 9.4 A6.1 6.1 0 0 1 2.4 10.4" fill="none" stroke="#1a7dff" stroke-width="1.3" stroke-linecap="round"/><path d="M2.0 13.4 V10.2 H5.2" fill="none" stroke="#1a7dff" stroke-width="1.3" stroke-linecap="round" stroke-linejoin="round"/></svg></div>
<div class="t" style="left:1226px;top:393px;font-size:12px;color:#666">-</div>
<div class="abs" style="left:1392px;top:390px"><svg width="16" height="16" viewBox="0 0 16 16" style=""><path d="M14.9 9.2 A7 7 0 1 0 6.8 14.9" fill="none" stroke="#1a7dff" stroke-width="1.05" stroke-linecap="round"/><path d="M9.9 6.0 Q9.5 4.7 7.9 4.7 Q6.0 4.7 6.0 6.2 Q6.0 7.5 7.9 7.9 Q10.0 8.4 10.0 9.8 Q10.0 11.3 7.9 11.3 Q6.1 11.3 5.8 10.0 M7.9 3.3 V4.7 M7.9 11.3 V12.7" fill="none" stroke="#1a7dff" stroke-width="1.0" stroke-linecap="round"/><path d="M9.4 14.9 L10.9 13.0 L12.0 14.4 L13.8 12.2" fill="none" stroke="#1a7dff" stroke-width="1.0" stroke-linecap="round" stroke-linejoin="round"/><path d="M12.5 10.9 L15.3 10.4 L14.7 13.2 Z" fill="#1a7dff"/></svg></div>
<div class="t" style="left:1441px;top:394px;font-size:12px;color:#222">固定竞价</div>
<div class="t" style="right:272px;top:392px;font-size:13px;color:#222">100%</div>
<div class="abs" style="left:1645px;top:392px"><svg width="14" height="14" viewBox="0 0 14 14" style=""><path d="M2.2 9.6 L8.6 1.6 Q9.4 0.8 10.3 1.5 L11.6 2.6 Q12.3 3.3 11.7 4.1 L5.4 11.6 L2.0 12.0 Z" fill="none" stroke="#8c8c8c" stroke-width="1.1" stroke-linejoin="round"/><path d="M0.5 13.5 H13.5" stroke="#8c8c8c" stroke-width="1.1"/></svg></div>
<div class="t" style="right:188px;top:392px;font-size:13px;color:#222">100%</div>
<div class="abs" style="left:1729px;top:392px"><svg width="14" height="14" viewBox="0 0 14 14" style=""><path d="M2.2 9.6 L8.6 1.6 Q9.4 0.8 10.3 1.5 L11.6 2.6 Q12.3 3.3 11.7 4.1 L5.4 11.6 L2.0 12.0 Z" fill="none" stroke="#8c8c8c" stroke-width="1.1" stroke-linejoin="round"/><path d="M0.5 13.5 H13.5" stroke="#8c8c8c" stroke-width="1.1"/></svg></div>
<div class="t" style="right:117px;top:392px;font-size:13px;color:#222">0%</div>
<div class="abs" style="left:1800px;top:392px"><svg width="14" height="14" viewBox="0 0 14 14" style=""><path d="M2.2 9.6 L8.6 1.6 Q9.4 0.8 10.3 1.5 L11.6 2.6 Q12.3 3.3 11.7 4.1 L5.4 11.6 L2.0 12.0 Z" fill="none" stroke="#8c8c8c" stroke-width="1.1" stroke-linejoin="round"/><path d="M0.5 13.5 H13.5" stroke="#8c8c8c" stroke-width="1.1"/></svg></div>
<div class="abs" style="left:219px;top:482px;width:1691px;height:1px;background:#e9eaef"></div>
<div class="abs" style="left:235px;top:440px"><svg width="14" height="14" viewBox="0 0 14 14" style=""><rect x="0.75" y="0.75" width="12.5" height="12.5" rx="1.6" fill="#fff" stroke="#d7dae4" stroke-width="1.5"/></svg></div>
<div class="t" style="left:267px;top:441px;font-size:12px;color:#1a7dff">演示广告活动</div>
<div class="abs" style="left:407px;top:441px;width:26px;height:14px;border-radius:7px;background:#0a7cff"></div><div class="abs" style="left:421px;top:443px;width:10px;height:10px;border-radius:5px;background:#fff"></div>
<div class="abs" style="left:455px;top:438px;width:93px;height:18px;overflow:hidden"><div class="t" style="left:0;top:3px;font-size:12px;color:#ff9f1a">超出预算 <span style="font-size:13px;position:relative;top:-1px;letter-spacing:.5px">08:02</span><span style="font-size:9px;position:relative;top:-1px;left:3px">'</span></div></div>
<div class="t" style="left:557px;top:442px;font-size:12px;color:#1a7dff">演示广告...</div>
<div class="t" style="left:651px;top:442px;font-size:12px;color:#222">品牌推广<span style="position:relative;top:-1.5px;font-size:12.5px;letter-spacing:.6px">(SB)</span></div>
<div class="t" style="left:758px;top:440px;font-size:13px;color:#222">cpc</div>
<div class="t" style="right:1021px;top:440px;font-size:13px;color:#222">US$4.00</div>
<div class="abs" style="left:895px;top:440px"><svg width="14" height="14" viewBox="0 0 14 14" style=""><path d="M2.2 9.6 L8.6 1.6 Q9.4 0.8 10.3 1.5 L11.6 2.6 Q12.3 3.3 11.7 4.1 L5.4 11.6 L2.0 12.0 Z" fill="none" stroke="#8c8c8c" stroke-width="1.1" stroke-linejoin="round"/><path d="M0.5 13.5 H13.5" stroke="#8c8c8c" stroke-width="1.1"/></svg></div>
<div class="abs" style="left:927px;top:441px;width:125px;height:8px;border-radius:4px;background:#f04142"></div>
<div class="t" style="left:1057px;top:440px;font-size:12px;color:#f04142">超预算</div>
<div class="t" style="left:927px;top:456px;font-size:12px;color:#999">超出预算<span style="position:relative;top:-1.5px;font-size:12.5px;letter-spacing:.6px">1.11%,</span>已花费<span style="position:relative;top:-1.5px;font-size:12.5px;letter-spacing:.6px">4.04U...</span></div>
<div class="t" style="left:1203px;top:441px;font-size:12px;color:#666">-</div>
<div class="t" style="left:1226px;top:441px;font-size:12px;color:#666">-</div>
<div class="abs" style="left:1392px;top:438px"><svg width="16" height="16" viewBox="0 0 16 16" style=""><path d="M14.9 9.2 A7 7 0 1 0 6.8 14.9" fill="none" stroke="#979797" stroke-width="1.05" stroke-linecap="round"/><path d="M9.9 6.0 Q9.5 4.7 7.9 4.7 Q6.0 4.7 6.0 6.2 Q6.0 7.5 7.9 7.9 Q10.0 8.4 10.0 9.8 Q10.0 11.3 7.9 11.3 Q6.1 11.3 5.8 10.0 M7.9 3.3 V4.7 M7.9 11.3 V12.7" fill="none" stroke="#979797" stroke-width="1.0" stroke-linecap="round"/><path d="M9.4 14.9 L10.9 13.0 L12.0 14.4 L13.8 12.2" fill="none" stroke="#979797" stroke-width="1.0" stroke-linecap="round" stroke-linejoin="round"/><path d="M12.5 10.9 L15.3 10.4 L14.7 13.2 Z" fill="#979797"/></svg></div>
<div class="t" style="left:1442px;top:441px;font-size:12px;color:#222">-</div>
<div class="t" style="right:250px;top:441px;font-size:12px;color:#222">-</div>
<div class="t" style="right:166px;top:441px;font-size:12px;color:#222">-</div>
<div class="t" style="right:95px;top:441px;font-size:12px;color:#222">-</div>
<div class="abs" style="left:219px;top:530px;width:1691px;height:1px;background:#e9eaef"></div>
<div class="abs" style="left:235px;top:488px"><svg width="14" height="14" viewBox="0 0 14 14" style=""><rect x="0.75" y="0.75" width="12.5" height="12.5" rx="1.6" fill="#fff" stroke="#d7dae4" stroke-width="1.5"/></svg></div>
<div class="t" style="left:267px;top:489px;font-size:12px;color:#1a7dff">演示广告活动</div>
<div class="abs" style="left:267px;top:506px;width:62px;height:18px;border:1px solid #dcdde3;border-radius:3px;background:#fff"></div>
<div class="t" style="left:274px;top:510px;font-size:12px;color:#555">手动投放</div>
<div class="abs" style="left:407px;top:489px;width:26px;height:14px;border-radius:7px;background:#0a7cff"></div><div class="abs" style="left:421px;top:491px;width:10px;height:10px;border-radius:5px;background:#fff"></div>
<div class="t" style="left:455px;top:490px;font-size:12px;color:#6abf40">正在投放</div>
<div class="abs" style="left:506px;top:492px"><svg width="10" height="6" viewBox="0 0 10 6" style=""><path d="M0.8 0.8 L5 5 L9.2 0.8" fill="none" stroke="#8a8c93" stroke-width="1.1" stroke-linecap="round" stroke-linejoin="round"/></svg></div>
<div class="t" style="left:557px;top:490px;font-size:12px;color:#1a7dff">演示广告...</div>
<div class="t" style="left:651px;top:490px;font-size:12px;color:#222">商品推广<span style="position:relative;top:-1.5px;font-size:12.5px;letter-spacing:.6px">(SP)</span></div>
<div class="t" style="left:758px;top:488px;font-size:13px;color:#222">cpc</div>
<div class="t" style="right:1021px;top:488px;font-size:13px;color:#222">US$5.00</div>
<div class="abs" style="left:895px;top:488px"><svg width="14" height="14" viewBox="0 0 14 14" style=""><path d="M2.2 9.6 L8.6 1.6 Q9.4 0.8 10.3 1.5 L11.6 2.6 Q12.3 3.3 11.7 4.1 L5.4 11.6 L2.0 12.0 Z" fill="none" stroke="#8c8c8c" stroke-width="1.1" stroke-linejoin="round"/><path d="M0.5 13.5 H13.5" stroke="#8c8c8c" stroke-width="1.1"/></svg></div>
<div class="t" style="left:928px;top:489px;font-size:12px;color:#666">-</div>
<div class="t" style="right:746px;top:488px;font-size:13px;color:#222">US$5.00</div>
<div class="t" style="left:1168px;top:490px;font-size:12px;color:#1a7dff">应用</div>
<div class="abs" style="left:1225px;top:489px;width:60px;height:8px;border-radius:4px;background:#0584ff"></div>
<div class="t" style="left:1291px;top:486px;font-size:13px;color:#555;letter-spacing:.5px">100.00%</div>
<div class="abs" style="left:1392px;top:486px"><svg width="16" height="16" viewBox="0 0 16 16" style=""><path d="M14.9 9.2 A7 7 0 1 0 6.8 14.9" fill="none" stroke="#979797" stroke-width="1.05" stroke-linecap="round"/><path d="M9.9 6.0 Q9.5 4.7 7.9 4.7 Q6.0 4.7 6.0 6.2 Q6.0 7.5 7.9 7.9 Q10.0 8.4 10.0 9.8 Q10.0 11.3 7.9 11.3 Q6.1 11.3 5.8 10.0 M7.9 3.3 V4.7 M7.9 11.3 V12.7" fill="none" stroke="#979797" stroke-width="1.0" stroke-linecap="round"/><path d="M9.4 14.9 L10.9 13.0 L12.0 14.4 L13.8 12.2" fill="none" stroke="#979797" stroke-width="1.0" stroke-linecap="round" stroke-linejoin="round"/><path d="M12.5 10.9 L15.3 10.4 L14.7 13.2 Z" fill="#979797"/></svg></div>
<div class="t" style="left:1441px;top:490px;font-size:12px;color:#222">固定竞价</div>
<div class="t" style="right:272px;top:488px;font-size:13px;color:#222">0%</div>
<div class="abs" style="left:1645px;top:488px"><svg width="14" height="14" viewBox="0 0 14 14" style=""><path d="M2.2 9.6 L8.6 1.6 Q9.4 0.8 10.3 1.5 L11.6 2.6 Q12.3 3.3 11.7 4.1 L5.4 11.6 L2.0 12.0 Z" fill="none" stroke="#8c8c8c" stroke-width="1.1" stroke-linejoin="round"/><path d="M0.5 13.5 H13.5" stroke="#8c8c8c" stroke-width="1.1"/></svg></div>
<div class="t" style="right:188px;top:488px;font-size:13px;color:#222">0%</div>
<div class="abs" style="left:1729px;top:488px"><svg width="14" height="14" viewBox="0 0 14 14" style=""><path d="M2.2 9.6 L8.6 1.6 Q9.4 0.8 10.3 1.5 L11.6 2.6 Q12.3 3.3 11.7 4.1 L5.4 11.6 L2.0 12.0 Z" fill="none" stroke="#8c8c8c" stroke-width="1.1" stroke-linejoin="round"/><path d="M0.5 13.5 H13.5" stroke="#8c8c8c" stroke-width="1.1"/></svg></div>
<div class="t" style="right:117px;top:488px;font-size:13px;color:#222">0%</div>
<div class="abs" style="left:1800px;top:488px"><svg width="14" height="14" viewBox="0 0 14 14" style=""><path d="M2.2 9.6 L8.6 1.6 Q9.4 0.8 10.3 1.5 L11.6 2.6 Q12.3 3.3 11.7 4.1 L5.4 11.6 L2.0 12.0 Z" fill="none" stroke="#8c8c8c" stroke-width="1.1" stroke-linejoin="round"/><path d="M0.5 13.5 H13.5" stroke="#8c8c8c" stroke-width="1.1"/></svg></div>
<div class="abs" style="left:219px;top:578px;width:1691px;height:1px;background:#e9eaef"></div>
<div class="abs" style="left:235px;top:536px"><svg width="14" height="14" viewBox="0 0 14 14" style=""><rect x="0.75" y="0.75" width="12.5" height="12.5" rx="1.6" fill="#fff" stroke="#d7dae4" stroke-width="1.5"/></svg></div>
<div class="t" style="left:267px;top:537px;font-size:12px;color:#1a7dff">演示广告活动</div>
<div class="abs" style="left:267px;top:554px;width:62px;height:18px;border:1px solid #dcdde3;border-radius:3px;background:#fff"></div>
<div class="t" style="left:274px;top:558px;font-size:12px;color:#555">手动投放</div>
<div class="abs" style="left:407px;top:537px;width:26px;height:14px;border-radius:7px;background:#0a7cff"></div><div class="abs" style="left:421px;top:539px;width:10px;height:10px;border-radius:5px;background:#fff"></div>
<div class="t" style="left:455px;top:538px;font-size:12px;color:#6abf40">正在投放</div>
<div class="abs" style="left:506px;top:540px"><svg width="10" height="6" viewBox="0 0 10 6" style=""><path d="M0.8 0.8 L5 5 L9.2 0.8" fill="none" stroke="#8a8c93" stroke-width="1.1" stroke-linecap="round" stroke-linejoin="round"/></svg></div>
<div class="t" style="left:557px;top:538px;font-size:12px;color:#1a7dff">演示广告...</div>
<div class="t" style="left:651px;top:538px;font-size:12px;color:#222">商品推广<span style="position:relative;top:-1.5px;font-size:12.5px;letter-spacing:.6px">(SP)</span></div>
<div class="t" style="left:758px;top:536px;font-size:13px;color:#222">cpc</div>
<div class="t" style="right:1021px;top:536px;font-size:13px;color:#222">US$20.00</div>
<div class="abs" style="left:895px;top:536px"><svg width="14" height="14" viewBox="0 0 14 14" style=""><path d="M2.2 9.6 L8.6 1.6 Q9.4 0.8 10.3 1.5 L11.6 2.6 Q12.3 3.3 11.7 4.1 L5.4 11.6 L2.0 12.0 Z" fill="none" stroke="#8c8c8c" stroke-width="1.1" stroke-linejoin="round"/><path d="M0.5 13.5 H13.5" stroke="#8c8c8c" stroke-width="1.1"/></svg></div>
<div class="t" style="left:928px;top:537px;font-size:12px;color:#666">-</div>
<div class="abs" style="left:1112px;top:534px;width:52px;height:16px;overflow:hidden"><div class="t" style="right:0;top:2px;font-size:13px;color:#222">US$20.00</div></div>
<div class="t" style="left:1168px;top:538px;font-size:12px;color:#1a7dff">应用</div>
<div class="abs" style="left:1225px;top:537px;width:60px;height:8px;border-radius:4px;background:#0584ff"></div>
<div class="t" style="left:1291px;top:534px;font-size:13px;color:#555;letter-spacing:.5px">100.00%</div>
<div class="abs" style="left:1392px;top:534px"><svg width="16" height="16" viewBox="0 0 16 16" style=""><path d="M14.9 9.2 A7 7 0 1 0 6.8 14.9" fill="none" stroke="#979797" stroke-width="1.05" stroke-linecap="round"/><path d="M9.9 6.0 Q9.5 4.7 7.9 4.7 Q6.0 4.7 6.0 6.2 Q6.0 7.5 7.9 7.9 Q10.0 8.4 10.0 9.8 Q10.0 11.3 7.9 11.3 Q6.1 11.3 5.8 10.0 M7.9 3.3 V4.7 M7.9 11.3 V12.7" fill="none" stroke="#979797" stroke-width="1.0" stroke-linecap="round"/><path d="M9.4 14.9 L10.9 13.0 L12.0 14.4 L13.8 12.2" fill="none" stroke="#979797" stroke-width="1.0" stroke-linecap="round" stroke-linejoin="round"/><path d="M12.5 10.9 L15.3 10.4 L14.7 13.2 Z" fill="#979797"/></svg></div>
<div class="t" style="left:1441px;top:538px;font-size:12px;color:#222">固定竞价</div>
<div class="t" style="right:272px;top:536px;font-size:13px;color:#222">0%</div>
<div class="abs" style="left:1645px;top:536px"><svg width="14" height="14" viewBox="0 0 14 14" style=""><path d="M2.2 9.6 L8.6 1.6 Q9.4 0.8 10.3 1.5 L11.6 2.6 Q12.3 3.3 11.7 4.1 L5.4 11.6 L2.0 12.0 Z" fill="none" stroke="#8c8c8c" stroke-width="1.1" stroke-linejoin="round"/><path d="M0.5 13.5 H13.5" stroke="#8c8c8c" stroke-width="1.1"/></svg></div>
<div class="t" style="right:188px;top:536px;font-size:13px;color:#222">0%</div>
<div class="abs" style="left:1729px;top:536px"><svg width="14" height="14" viewBox="0 0 14 14" style=""><path d="M2.2 9.6 L8.6 1.6 Q9.4 0.8 10.3 1.5 L11.6 2.6 Q12.3 3.3 11.7 4.1 L5.4 11.6 L2.0 12.0 Z" fill="none" stroke="#8c8c8c" stroke-width="1.1" stroke-linejoin="round"/><path d="M0.5 13.5 H13.5" stroke="#8c8c8c" stroke-width="1.1"/></svg></div>
<div class="t" style="right:117px;top:536px;font-size:13px;color:#222">0%</div>
<div class="abs" style="left:1800px;top:536px"><svg width="14" height="14" viewBox="0 0 14 14" style=""><path d="M2.2 9.6 L8.6 1.6 Q9.4 0.8 10.3 1.5 L11.6 2.6 Q12.3 3.3 11.7 4.1 L5.4 11.6 L2.0 12.0 Z" fill="none" stroke="#8c8c8c" stroke-width="1.1" stroke-linejoin="round"/><path d="M0.5 13.5 H13.5" stroke="#8c8c8c" stroke-width="1.1"/></svg></div>
<div class="abs" style="left:219px;top:626px;width:1691px;height:1px;background:#e9eaef"></div>
<div class="abs" style="left:235px;top:584px"><svg width="14" height="14" viewBox="0 0 14 14" style=""><rect x="0.75" y="0.75" width="12.5" height="12.5" rx="1.6" fill="#fff" stroke="#d7dae4" stroke-width="1.5"/></svg></div>
<div class="t" style="left:267px;top:585px;font-size:12px;color:#1a7dff">演示广告活动</div>
<div class="abs" style="left:267px;top:602px;width:62px;height:18px;border:1px solid #dcdde3;border-radius:3px;background:#fff"></div>
<div class="t" style="left:274px;top:606px;font-size:12px;color:#555">手动投放</div>
<div class="abs" style="left:407px;top:585px;width:26px;height:14px;border-radius:7px;background:#0a7cff"></div><div class="abs" style="left:421px;top:587px;width:10px;height:10px;border-radius:5px;background:#fff"></div>
<div class="t" style="left:455px;top:586px;font-size:12px;color:#6abf40">正在投放</div>
<div class="abs" style="left:506px;top:588px"><svg width="10" height="6" viewBox="0 0 10 6" style=""><path d="M0.8 0.8 L5 5 L9.2 0.8" fill="none" stroke="#8a8c93" stroke-width="1.1" stroke-linecap="round" stroke-linejoin="round"/></svg></div>
<div class="t" style="left:557px;top:586px;font-size:12px;color:#1a7dff">演示广告...</div>
<div class="t" style="left:651px;top:586px;font-size:12px;color:#222">商品推广<span style="position:relative;top:-1.5px;font-size:12.5px;letter-spacing:.6px">(SP)</span></div>
<div class="t" style="left:758px;top:584px;font-size:13px;color:#222">cpc</div>
<div class="t" style="right:1021px;top:584px;font-size:13px;color:#222">US$5.00</div>
<div class="abs" style="left:895px;top:584px"><svg width="14" height="14" viewBox="0 0 14 14" style=""><path d="M2.2 9.6 L8.6 1.6 Q9.4 0.8 10.3 1.5 L11.6 2.6 Q12.3 3.3 11.7 4.1 L5.4 11.6 L2.0 12.0 Z" fill="none" stroke="#8c8c8c" stroke-width="1.1" stroke-linejoin="round"/><path d="M0.5 13.5 H13.5" stroke="#8c8c8c" stroke-width="1.1"/></svg></div>
<div class="t" style="left:928px;top:585px;font-size:12px;color:#666">-</div>
<div class="t" style="left:1226px;top:585px;font-size:12px;color:#666">-</div>
<div class="abs" style="left:1392px;top:582px"><svg width="16" height="16" viewBox="0 0 16 16" style=""><path d="M14.9 9.2 A7 7 0 1 0 6.8 14.9" fill="none" stroke="#979797" stroke-width="1.05" stroke-linecap="round"/><path d="M9.9 6.0 Q9.5 4.7 7.9 4.7 Q6.0 4.7 6.0 6.2 Q6.0 7.5 7.9 7.9 Q10.0 8.4 10.0 9.8 Q10.0 11.3 7.9 11.3 Q6.1 11.3 5.8 10.0 M7.9 3.3 V4.7 M7.9 11.3 V12.7" fill="none" stroke="#979797" stroke-width="1.0" stroke-linecap="round"/><path d="M9.4 14.9 L10.9 13.0 L12.0 14.4 L13.8 12.2" fill="none" stroke="#979797" stroke-width="1.0" stroke-linecap="round" stroke-linejoin="round"/><path d="M12.5 10.9 L15.3 10.4 L14.7 13.2 Z" fill="#979797"/></svg></div>
<div class="t" style="left:1441px;top:586px;font-size:12px;color:#222">固定竞价</div>
<div class="t" style="right:272px;top:584px;font-size:13px;color:#222">0%</div>
<div class="abs" style="left:1645px;top:584px"><svg width="14" height="14" viewBox="0 0 14 14" style=""><path d="M2.2 9.6 L8.6 1.6 Q9.4 0.8 10.3 1.5 L11.6 2.6 Q12.3 3.3 11.7 4.1 L5.4 11.6 L2.0 12.0 Z" fill="none" stroke="#8c8c8c" stroke-width="1.1" stroke-linejoin="round"/><path d="M0.5 13.5 H13.5" stroke="#8c8c8c" stroke-width="1.1"/></svg></div>
<div class="t" style="right:188px;top:584px;font-size:13px;color:#222">0%</div>
<div class="abs" style="left:1729px;top:584px"><svg width="14" height="14" viewBox="0 0 14 14" style=""><path d="M2.2 9.6 L8.6 1.6 Q9.4 0.8 10.3 1.5 L11.6 2.6 Q12.3 3.3 11.7 4.1 L5.4 11.6 L2.0 12.0 Z" fill="none" stroke="#8c8c8c" stroke-width="1.1" stroke-linejoin="round"/><path d="M0.5 13.5 H13.5" stroke="#8c8c8c" stroke-width="1.1"/></svg></div>
<div class="t" style="right:117px;top:584px;font-size:13px;color:#222">0%</div>
<div class="abs" style="left:1800px;top:584px"><svg width="14" height="14" viewBox="0 0 14 14" style=""><path d="M2.2 9.6 L8.6 1.6 Q9.4 0.8 10.3 1.5 L11.6 2.6 Q12.3 3.3 11.7 4.1 L5.4 11.6 L2.0 12.0 Z" fill="none" stroke="#8c8c8c" stroke-width="1.1" stroke-linejoin="round"/><path d="M0.5 13.5 H13.5" stroke="#8c8c8c" stroke-width="1.1"/></svg></div>
<div class="abs" style="left:219px;top:674px;width:1691px;height:1px;background:#e9eaef"></div>
<div class="abs" style="left:235px;top:632px"><svg width="14" height="14" viewBox="0 0 14 14" style=""><rect x="0.75" y="0.75" width="12.5" height="12.5" rx="1.6" fill="#fff" stroke="#d7dae4" stroke-width="1.5"/></svg></div>
<div class="t" style="left:267px;top:633px;font-size:12px;color:#1a7dff">演示广告活动</div>
<div class="abs" style="left:267px;top:650px;width:62px;height:18px;border:1px solid #dcdde3;border-radius:3px;background:#fff"></div>
<div class="t" style="left:274px;top:654px;font-size:12px;color:#555">手动投放</div>
<div class="abs" style="left:407px;top:633px;width:26px;height:14px;border-radius:7px;background:#0a7cff"></div><div class="abs" style="left:421px;top:635px;width:10px;height:10px;border-radius:5px;background:#fff"></div>
<div class="t" style="left:455px;top:634px;font-size:12px;color:#6abf40">正在投放</div>
<div class="abs" style="left:506px;top:636px"><svg width="10" height="6" viewBox="0 0 10 6" style=""><path d="M0.8 0.8 L5 5 L9.2 0.8" fill="none" stroke="#8a8c93" stroke-width="1.1" stroke-linecap="round" stroke-linejoin="round"/></svg></div>
<div class="t" style="left:557px;top:634px;font-size:12px;color:#1a7dff">演示广告...</div>
<div class="t" style="left:651px;top:634px;font-size:12px;color:#222">商品推广<span style="position:relative;top:-1.5px;font-size:12.5px;letter-spacing:.6px">(SP)</span></div>
<div class="t" style="left:758px;top:632px;font-size:13px;color:#222">cpc</div>
<div class="t" style="right:1021px;top:632px;font-size:13px;color:#222">US$30.00</div>
<div class="abs" style="left:895px;top:632px"><svg width="14" height="14" viewBox="0 0 14 14" style=""><path d="M2.2 9.6 L8.6 1.6 Q9.4 0.8 10.3 1.5 L11.6 2.6 Q12.3 3.3 11.7 4.1 L5.4 11.6 L2.0 12.0 Z" fill="none" stroke="#8c8c8c" stroke-width="1.1" stroke-linejoin="round"/><path d="M0.5 13.5 H13.5" stroke="#8c8c8c" stroke-width="1.1"/></svg></div>
<div class="t" style="left:928px;top:633px;font-size:12px;color:#666">-</div>
<div class="t" style="left:1226px;top:633px;font-size:12px;color:#666">-</div>
<div class="abs" style="left:1392px;top:630px"><svg width="16" height="16" viewBox="0 0 16 16" style=""><path d="M14.9 9.2 A7 7 0 1 0 6.8 14.9" fill="none" stroke="#979797" stroke-width="1.05" stroke-linecap="round"/><path d="M9.9 6.0 Q9.5 4.7 7.9 4.7 Q6.0 4.7 6.0 6.2 Q6.0 7.5 7.9 7.9 Q10.0 8.4 10.0 9.8 Q10.0 11.3 7.9 11.3 Q6.1 11.3 5.8 10.0 M7.9 3.3 V4.7 M7.9 11.3 V12.7" fill="none" stroke="#979797" stroke-width="1.0" stroke-linecap="round"/><path d="M9.4 14.9 L10.9 13.0 L12.0 14.4 L13.8 12.2" fill="none" stroke="#979797" stroke-width="1.0" stroke-linecap="round" stroke-linejoin="round"/><path d="M12.5 10.9 L15.3 10.4 L14.7 13.2 Z" fill="#979797"/></svg></div>
<div class="t" style="left:1441px;top:634px;font-size:12px;color:#222">固定竞价</div>
<div class="t" style="right:272px;top:632px;font-size:13px;color:#222">0%</div>
<div class="abs" style="left:1645px;top:632px"><svg width="14" height="14" viewBox="0 0 14 14" style=""><path d="M2.2 9.6 L8.6 1.6 Q9.4 0.8 10.3 1.5 L11.6 2.6 Q12.3 3.3 11.7 4.1 L5.4 11.6 L2.0 12.0 Z" fill="none" stroke="#8c8c8c" stroke-width="1.1" stroke-linejoin="round"/><path d="M0.5 13.5 H13.5" stroke="#8c8c8c" stroke-width="1.1"/></svg></div>
<div class="t" style="right:188px;top:632px;font-size:13px;color:#222">0%</div>
<div class="abs" style="left:1729px;top:632px"><svg width="14" height="14" viewBox="0 0 14 14" style=""><path d="M2.2 9.6 L8.6 1.6 Q9.4 0.8 10.3 1.5 L11.6 2.6 Q12.3 3.3 11.7 4.1 L5.4 11.6 L2.0 12.0 Z" fill="none" stroke="#8c8c8c" stroke-width="1.1" stroke-linejoin="round"/><path d="M0.5 13.5 H13.5" stroke="#8c8c8c" stroke-width="1.1"/></svg></div>
<div class="t" style="right:117px;top:632px;font-size:13px;color:#222">0%</div>
<div class="abs" style="left:1800px;top:632px"><svg width="14" height="14" viewBox="0 0 14 14" style=""><path d="M2.2 9.6 L8.6 1.6 Q9.4 0.8 10.3 1.5 L11.6 2.6 Q12.3 3.3 11.7 4.1 L5.4 11.6 L2.0 12.0 Z" fill="none" stroke="#8c8c8c" stroke-width="1.1" stroke-linejoin="round"/><path d="M0.5 13.5 H13.5" stroke="#8c8c8c" stroke-width="1.1"/></svg></div>
<div class="abs" style="left:219px;top:722px;width:1691px;height:1px;background:#e9eaef"></div>
<div class="abs" style="left:235px;top:680px"><svg width="14" height="14" viewBox="0 0 14 14" style=""><rect x="0.75" y="0.75" width="12.5" height="12.5" rx="1.6" fill="#fff" stroke="#d7dae4" stroke-width="1.5"/></svg></div>
<div class="t" style="left:267px;top:681px;font-size:12px;color:#1a7dff">演示广告活动</div>
<div class="abs" style="left:267px;top:698px;width:62px;height:18px;border:1px solid #dcdde3;border-radius:3px;background:#fff"></div>
<div class="t" style="left:274px;top:702px;font-size:12px;color:#555">手动投放</div>
<div class="abs" style="left:407px;top:681px;width:26px;height:14px;border-radius:7px;background:#0a7cff"></div><div class="abs" style="left:421px;top:683px;width:10px;height:10px;border-radius:5px;background:#fff"></div>
<div class="t" style="left:455px;top:682px;font-size:12px;color:#6abf40">正在投放</div>
<div class="abs" style="left:506px;top:684px"><svg width="10" height="6" viewBox="0 0 10 6" style=""><path d="M0.8 0.8 L5 5 L9.2 0.8" fill="none" stroke="#8a8c93" stroke-width="1.1" stroke-linecap="round" stroke-linejoin="round"/></svg></div>
<div class="t" style="left:557px;top:682px;font-size:12px;color:#1a7dff">演示广告...</div>
<div class="t" style="left:651px;top:682px;font-size:12px;color:#222">商品推广<span style="position:relative;top:-1.5px;font-size:12.5px;letter-spacing:.6px">(SP)</span></div>
<div class="t" style="left:758px;top:680px;font-size:13px;color:#222">cpc</div>
<div class="t" style="right:1021px;top:680px;font-size:13px;color:#222">￡10.00</div>
<div class="abs" style="left:895px;top:680px"><svg width="14" height="14" viewBox="0 0 14 14" style=""><path d="M2.2 9.6 L8.6 1.6 Q9.4 0.8 10.3 1.5 L11.6 2.6 Q12.3 3.3 11.7 4.1 L5.4 11.6 L2.0 12.0 Z" fill="none" stroke="#8c8c8c" stroke-width="1.1" stroke-linejoin="round"/><path d="M0.5 13.5 H13.5" stroke="#8c8c8c" stroke-width="1.1"/></svg></div>
<div class="t" style="left:928px;top:681px;font-size:12px;color:#666">-</div>
<div class="t" style="left:1226px;top:681px;font-size:12px;color:#666">-</div>
<div class="abs" style="left:1392px;top:678px"><svg width="16" height="16" viewBox="0 0 16 16" style=""><path d="M14.9 9.2 A7 7 0 1 0 6.8 14.9" fill="none" stroke="#979797" stroke-width="1.05" stroke-linecap="round"/><path d="M9.9 6.0 Q9.5 4.7 7.9 4.7 Q6.0 4.7 6.0 6.2 Q6.0 7.5 7.9 7.9 Q10.0 8.4 10.0 9.8 Q10.0 11.3 7.9 11.3 Q6.1 11.3 5.8 10.0 M7.9 3.3 V4.7 M7.9 11.3 V12.7" fill="none" stroke="#979797" stroke-width="1.0" stroke-linecap="round"/><path d="M9.4 14.9 L10.9 13.0 L12.0 14.4 L13.8 12.2" fill="none" stroke="#979797" stroke-width="1.0" stroke-linecap="round" stroke-linejoin="round"/><path d="M12.5 10.9 L15.3 10.4 L14.7 13.2 Z" fill="#979797"/></svg></div>
<div class="t" style="left:1441px;top:682px;font-size:12px;color:#222">固定竞价</div>
<div class="t" style="right:272px;top:680px;font-size:13px;color:#222">0%</div>
<div class="abs" style="left:1645px;top:680px"><svg width="14" height="14" viewBox="0 0 14 14" style=""><path d="M2.2 9.6 L8.6 1.6 Q9.4 0.8 10.3 1.5 L11.6 2.6 Q12.3 3.3 11.7 4.1 L5.4 11.6 L2.0 12.0 Z" fill="none" stroke="#8c8c8c" stroke-width="1.1" stroke-linejoin="round"/><path d="M0.5 13.5 H13.5" stroke="#8c8c8c" stroke-width="1.1"/></svg></div>
<div class="t" style="right:188px;top:680px;font-size:13px;color:#222">0%</div>
<div class="abs" style="left:1729px;top:680px"><svg width="14" height="14" viewBox="0 0 14 14" style=""><path d="M2.2 9.6 L8.6 1.6 Q9.4 0.8 10.3 1.5 L11.6 2.6 Q12.3 3.3 11.7 4.1 L5.4 11.6 L2.0 12.0 Z" fill="none" stroke="#8c8c8c" stroke-width="1.1" stroke-linejoin="round"/><path d="M0.5 13.5 H13.5" stroke="#8c8c8c" stroke-width="1.1"/></svg></div>
<div class="t" style="right:117px;top:680px;font-size:13px;color:#222">0%</div>
<div class="abs" style="left:1800px;top:680px"><svg width="14" height="14" viewBox="0 0 14 14" style=""><path d="M2.2 9.6 L8.6 1.6 Q9.4 0.8 10.3 1.5 L11.6 2.6 Q12.3 3.3 11.7 4.1 L5.4 11.6 L2.0 12.0 Z" fill="none" stroke="#8c8c8c" stroke-width="1.1" stroke-linejoin="round"/><path d="M0.5 13.5 H13.5" stroke="#8c8c8c" stroke-width="1.1"/></svg></div>
<div class="abs" style="left:219px;top:770px;width:1691px;height:1px;background:#e9eaef"></div>
<div class="abs" style="left:235px;top:728px"><svg width="14" height="14" viewBox="0 0 14 14" style=""><rect x="0.75" y="0.75" width="12.5" height="12.5" rx="1.6" fill="#fff" stroke="#d7dae4" stroke-width="1.5"/></svg></div>
<div class="t" style="left:267px;top:729px;font-size:12px;color:#1a7dff">演示广告活动</div>
<div class="abs" style="left:407px;top:729px;width:26px;height:14px;border-radius:7px;background:#0a7cff"></div><div class="abs" style="left:421px;top:731px;width:10px;height:10px;border-radius:5px;background:#fff"></div>
<div class="abs" style="left:455px;top:726px;width:93px;height:18px;overflow:hidden"><div class="t" style="left:0;top:3px;font-size:12px;color:#ff9f1a">超出预算 <span style="font-size:13px;position:relative;top:-1px;letter-spacing:.5px">14:51</span><span style="font-size:9px;position:relative;top:-1px;left:3px">'</span></div></div>
<div class="t" style="left:557px;top:730px;font-size:12px;color:#1a7dff">演示广告...</div>
<div class="t" style="left:651px;top:730px;font-size:12px;color:#222">品牌推广<span style="position:relative;top:-1.5px;font-size:12.5px;letter-spacing:.6px">(SB)</span></div>
<div class="t" style="left:758px;top:728px;font-size:13px;color:#222">cpc</div>
<div class="t" style="right:1021px;top:728px;font-size:13px;color:#222">US$5.00</div>
<div class="abs" style="left:895px;top:728px"><svg width="14" height="14" viewBox="0 0 14 14" style=""><path d="M2.2 9.6 L8.6 1.6 Q9.4 0.8 10.3 1.5 L11.6 2.6 Q12.3 3.3 11.7 4.1 L5.4 11.6 L2.0 12.0 Z" fill="none" stroke="#8c8c8c" stroke-width="1.1" stroke-linejoin="round"/><path d="M0.5 13.5 H13.5" stroke="#8c8c8c" stroke-width="1.1"/></svg></div>
<div class="abs" style="left:927px;top:729px;width:125px;height:8px;border-radius:4px;background:#f04142"></div>
<div class="t" style="left:1057px;top:728px;font-size:12px;color:#f04142">超预算</div>
<div class="t" style="left:927px;top:744px;font-size:12px;color:#999">超出预算<span style="position:relative;top:-1.5px;font-size:12.5px;letter-spacing:.6px">3.93%,</span>已花费<span style="position:relative;top:-1.5px;font-size:12.5px;letter-spacing:.6px">5.20U...</span></div>
<div class="t" style="left:1203px;top:729px;font-size:12px;color:#666">-</div>
<div class="t" style="left:1226px;top:729px;font-size:12px;color:#666">-</div>
<div class="abs" style="left:1392px;top:726px"><svg width="16" height="16" viewBox="0 0 16 16" style=""><path d="M14.9 9.2 A7 7 0 1 0 6.8 14.9" fill="none" stroke="#979797" stroke-width="1.05" stroke-linecap="round"/><path d="M9.9 6.0 Q9.5 4.7 7.9 4.7 Q6.0 4.7 6.0 6.2 Q6.0 7.5 7.9 7.9 Q10.0 8.4 10.0 9.8 Q10.0 11.3 7.9 11.3 Q6.1 11.3 5.8 10.0 M7.9 3.3 V4.7 M7.9 11.3 V12.7" fill="none" stroke="#979797" stroke-width="1.0" stroke-linecap="round"/><path d="M9.4 14.9 L10.9 13.0 L12.0 14.4 L13.8 12.2" fill="none" stroke="#979797" stroke-width="1.0" stroke-linecap="round" stroke-linejoin="round"/><path d="M12.5 10.9 L15.3 10.4 L14.7 13.2 Z" fill="#979797"/></svg></div>
<div class="t" style="left:1442px;top:729px;font-size:12px;color:#222">-</div>
<div class="t" style="right:250px;top:729px;font-size:12px;color:#222">-</div>
<div class="t" style="right:166px;top:729px;font-size:12px;color:#222">-</div>
<div class="t" style="right:95px;top:729px;font-size:12px;color:#222">-</div>
<div class="abs" style="left:219px;top:818px;width:1691px;height:1px;background:#e9eaef"></div>
<div class="abs" style="left:235px;top:776px"><svg width="14" height="14" viewBox="0 0 14 14" style=""><rect x="0.75" y="0.75" width="12.5" height="12.5" rx="1.6" fill="#fff" stroke="#d7dae4" stroke-width="1.5"/></svg></div>
<div class="t" style="left:267px;top:777px;font-size:12px;color:#1a7dff">演示广告活动</div>
<div class="abs" style="left:267px;top:794px;width:62px;height:18px;border:1px solid #dcdde3;border-radius:3px;background:#fff"></div>
<div class="t" style="left:274px;top:798px;font-size:12px;color:#555">手动投放</div>
<div class="abs" style="left:407px;top:777px;width:26px;height:14px;border-radius:7px;background:#0a7cff"></div><div class="abs" style="left:421px;top:779px;width:10px;height:10px;border-radius:5px;background:#fff"></div>
<div class="t" style="left:455px;top:778px;font-size:12px;color:#6abf40">正在投放</div>
<div class="abs" style="left:506px;top:780px"><svg width="10" height="6" viewBox="0 0 10 6" style=""><path d="M0.8 0.8 L5 5 L9.2 0.8" fill="none" stroke="#8a8c93" stroke-width="1.1" stroke-linecap="round" stroke-linejoin="round"/></svg></div>
<div class="t" style="left:557px;top:778px;font-size:12px;color:#1a7dff">演示广告...</div>
<div class="t" style="left:651px;top:778px;font-size:12px;color:#222">商品推广<span style="position:relative;top:-1.5px;font-size:12.5px;letter-spacing:.6px">(SP)</span></div>
<div class="t" style="left:758px;top:776px;font-size:13px;color:#222">cpc</div>
<div class="t" style="right:1021px;top:776px;font-size:13px;color:#222">US$5.00</div>
<div class="abs" style="left:895px;top:776px"><svg width="14" height="14" viewBox="0 0 14 14" style=""><path d="M2.2 9.6 L8.6 1.6 Q9.4 0.8 10.3 1.5 L11.6 2.6 Q12.3 3.3 11.7 4.1 L5.4 11.6 L2.0 12.0 Z" fill="none" stroke="#8c8c8c" stroke-width="1.1" stroke-linejoin="round"/><path d="M0.5 13.5 H13.5" stroke="#8c8c8c" stroke-width="1.1"/></svg></div>
<div class="t" style="left:928px;top:777px;font-size:12px;color:#666">-</div>
<div class="t" style="left:1226px;top:777px;font-size:12px;color:#666">-</div>
<div class="abs" style="left:1392px;top:774px"><svg width="16" height="16" viewBox="0 0 16 16" style=""><path d="M14.9 9.2 A7 7 0 1 0 6.8 14.9" fill="none" stroke="#979797" stroke-width="1.05" stroke-linecap="round"/><path d="M9.9 6.0 Q9.5 4.7 7.9 4.7 Q6.0 4.7 6.0 6.2 Q6.0 7.5 7.9 7.9 Q10.0 8.4 10.0 9.8 Q10.0 11.3 7.9 11.3 Q6.1 11.3 5.8 10.0 M7.9 3.3 V4.7 M7.9 11.3 V12.7" fill="none" stroke="#979797" stroke-width="1.0" stroke-linecap="round"/><path d="M9.4 14.9 L10.9 13.0 L12.0 14.4 L13.8 12.2" fill="none" stroke="#979797" stroke-width="1.0" stroke-linecap="round" stroke-linejoin="round"/><path d="M12.5 10.9 L15.3 10.4 L14.7 13.2 Z" fill="#979797"/></svg></div>
<div class="t" style="left:1441px;top:778px;font-size:12px;color:#222">固定竞价</div>
<div class="t" style="right:272px;top:776px;font-size:13px;color:#222">0%</div>
<div class="abs" style="left:1645px;top:776px"><svg width="14" height="14" viewBox="0 0 14 14" style=""><path d="M2.2 9.6 L8.6 1.6 Q9.4 0.8 10.3 1.5 L11.6 2.6 Q12.3 3.3 11.7 4.1 L5.4 11.6 L2.0 12.0 Z" fill="none" stroke="#8c8c8c" stroke-width="1.1" stroke-linejoin="round"/><path d="M0.5 13.5 H13.5" stroke="#8c8c8c" stroke-width="1.1"/></svg></div>
<div class="t" style="right:188px;top:776px;font-size:13px;color:#222">0%</div>
<div class="abs" style="left:1729px;top:776px"><svg width="14" height="14" viewBox="0 0 14 14" style=""><path d="M2.2 9.6 L8.6 1.6 Q9.4 0.8 10.3 1.5 L11.6 2.6 Q12.3 3.3 11.7 4.1 L5.4 11.6 L2.0 12.0 Z" fill="none" stroke="#8c8c8c" stroke-width="1.1" stroke-linejoin="round"/><path d="M0.5 13.5 H13.5" stroke="#8c8c8c" stroke-width="1.1"/></svg></div>
<div class="t" style="right:117px;top:776px;font-size:13px;color:#222">0%</div>
<div class="abs" style="left:1800px;top:776px"><svg width="14" height="14" viewBox="0 0 14 14" style=""><path d="M2.2 9.6 L8.6 1.6 Q9.4 0.8 10.3 1.5 L11.6 2.6 Q12.3 3.3 11.7 4.1 L5.4 11.6 L2.0 12.0 Z" fill="none" stroke="#8c8c8c" stroke-width="1.1" stroke-linejoin="round"/><path d="M0.5 13.5 H13.5" stroke="#8c8c8c" stroke-width="1.1"/></svg></div>
<div class="abs" style="left:1814px;top:292px;width:10px;height:485px;background:linear-gradient(90deg,rgba(0,0,0,0),rgba(0,0,0,.045))"></div>
<div class="abs" style="left:1824px;top:292px;width:86px;height:485px;background:#fff"></div>
<div class="abs" style="left:1824px;top:386px;width:86px;height:48px;background:#f0f1f5"></div>
<div class="abs" style="left:1824px;top:338px;width:86px;height:1px;background:#e4e6ec"></div>
<div class="t" style="left:1833px;top:310px;font-weight:700;font-size:12px;color:#111">操作</div>
<div class="t" style="left:1841px;top:358px;font-size:12px;color:#1a7dff">分析</div>
<div class="abs" style="left:1824px;top:434px;width:86px;height:1px;background:#e9eaef"></div>
<div class="t" style="left:1833px;top:394px;font-size:12px;color:#1a7dff">分析</div>
<div class="abs" style="left:1870px;top:397px"><svg width="10" height="3" viewBox="0 0 10 3" style=""><circle cx="1.3" cy="1.5" r="1.25" fill="#1a7dff"/><circle cx="5.3" cy="1.5" r="1.25" fill="#1a7dff"/><circle cx="9.3" cy="1.5" r="1.25" fill="#1a7dff"/></svg></div>
<div class="abs" style="left:1824px;top:482px;width:86px;height:1px;background:#e9eaef"></div>
<div class="t" style="left:1833px;top:442px;font-size:12px;color:#1a7dff">分析</div>
<div class="abs" style="left:1870px;top:445px"><svg width="10" height="3" viewBox="0 0 10 3" style=""><circle cx="1.3" cy="1.5" r="1.25" fill="#1a7dff"/><circle cx="5.3" cy="1.5" r="1.25" fill="#1a7dff"/><circle cx="9.3" cy="1.5" r="1.25" fill="#1a7dff"/></svg></div>
<div class="abs" style="left:1824px;top:530px;width:86px;height:1px;background:#e9eaef"></div>
<div class="t" style="left:1833px;top:490px;font-size:12px;color:#1a7dff">分析</div>
<div class="abs" style="left:1870px;top:493px"><svg width="10" height="3" viewBox="0 0 10 3" style=""><circle cx="1.3" cy="1.5" r="1.25" fill="#1a7dff"/><circle cx="5.3" cy="1.5" r="1.25" fill="#1a7dff"/><circle cx="9.3" cy="1.5" r="1.25" fill="#1a7dff"/></svg></div>
<div class="abs" style="left:1824px;top:578px;width:86px;height:1px;background:#e9eaef"></div>
<div class="t" style="left:1833px;top:538px;font-size:12px;color:#1a7dff">分析</div>
<div class="abs" style="left:1870px;top:541px"><svg width="10" height="3" viewBox="0 0 10 3" style=""><circle cx="1.3" cy="1.5" r="1.25" fill="#1a7dff"/><circle cx="5.3" cy="1.5" r="1.25" fill="#1a7dff"/><circle cx="9.3" cy="1.5" r="1.25" fill="#1a7dff"/></svg></div>
<div class="abs" style="left:1824px;top:626px;width:86px;height:1px;background:#e9eaef"></div>
<div class="t" style="left:1833px;top:586px;font-size:12px;color:#1a7dff">分析</div>
<div class="abs" style="left:1870px;top:589px"><svg width="10" height="3" viewBox="0 0 10 3" style=""><circle cx="1.3" cy="1.5" r="1.25" fill="#1a7dff"/><circle cx="5.3" cy="1.5" r="1.25" fill="#1a7dff"/><circle cx="9.3" cy="1.5" r="1.25" fill="#1a7dff"/></svg></div>
<div class="abs" style="left:1824px;top:674px;width:86px;height:1px;background:#e9eaef"></div>
<div class="t" style="left:1833px;top:634px;font-size:12px;color:#1a7dff">分析</div>
<div class="abs" style="left:1870px;top:637px"><svg width="10" height="3" viewBox="0 0 10 3" style=""><circle cx="1.3" cy="1.5" r="1.25" fill="#1a7dff"/><circle cx="5.3" cy="1.5" r="1.25" fill="#1a7dff"/><circle cx="9.3" cy="1.5" r="1.25" fill="#1a7dff"/></svg></div>
<div class="abs" style="left:1824px;top:722px;width:86px;height:1px;background:#e9eaef"></div>
<div class="t" style="left:1833px;top:682px;font-size:12px;color:#1a7dff">分析</div>
<div class="abs" style="left:1870px;top:685px"><svg width="10" height="3" viewBox="0 0 10 3" style=""><circle cx="1.3" cy="1.5" r="1.25" fill="#1a7dff"/><circle cx="5.3" cy="1.5" r="1.25" fill="#1a7dff"/><circle cx="9.3" cy="1.5" r="1.25" fill="#1a7dff"/></svg></div>
<div class="abs" style="left:1824px;top:770px;width:86px;height:1px;background:#e9eaef"></div>
<div class="t" style="left:1833px;top:730px;font-size:12px;color:#1a7dff">分析</div>
<div class="abs" style="left:1870px;top:733px"><svg width="10" height="3" viewBox="0 0 10 3" style=""><circle cx="1.3" cy="1.5" r="1.25" fill="#1a7dff"/><circle cx="5.3" cy="1.5" r="1.25" fill="#1a7dff"/><circle cx="9.3" cy="1.5" r="1.25" fill="#1a7dff"/></svg></div>
<div class="abs" style="left:1824px;top:818px;width:86px;height:1px;background:#e9eaef"></div>
<div class="t" style="left:1833px;top:778px;font-size:12px;color:#1a7dff">分析</div>
<div class="abs" style="left:1870px;top:781px"><svg width="10" height="3" viewBox="0 0 10 3" style=""><circle cx="1.3" cy="1.5" r="1.25" fill="#1a7dff"/><circle cx="5.3" cy="1.5" r="1.25" fill="#1a7dff"/><circle cx="9.3" cy="1.5" r="1.25" fill="#1a7dff"/></svg></div>
<div class="abs" style="left:1907px;top:387px;width:3px;height:248px;background:#c6c7ca;border-radius:2px 0 0 2px"></div>
<div class="abs" style="left:1356px;top:275px;width:86px;height:63px;border:3px solid #f53434"></div>
<div class="abs" style="left:1381px;top:381px;width:39px;height:31px;border:3px solid #f53434"></div>
<div class="abs" style="left:1472px;top:395px;width:435px;height:50px;background:rgba(0,0,0,.6);border-radius:4px"></div>
<div class="abs" style="left:1464px;top:412px;width:0;height:0;border-top:8px solid transparent;border-bottom:8px solid transparent;border-right:8px solid rgba(0,0,0,.6)"></div>
<div class="t" style="left:1481px;top:409px;font-size:24px;color:#fff">点击<span style="display:inline-block;width:24px;text-align:right">“</span>预算分析<span style="display:inline-block;width:24px;text-align:left">”</span>图标，即可跳转页面</div>
<div class="abs" style="left:1428px;top:405px;width:30px;height:30px;border-radius:15px;background:#f73636"></div>
<div class="t" style="left:1437.5px;top:409px;font-size:20px;color:#fff">1</div>
</body></html>
